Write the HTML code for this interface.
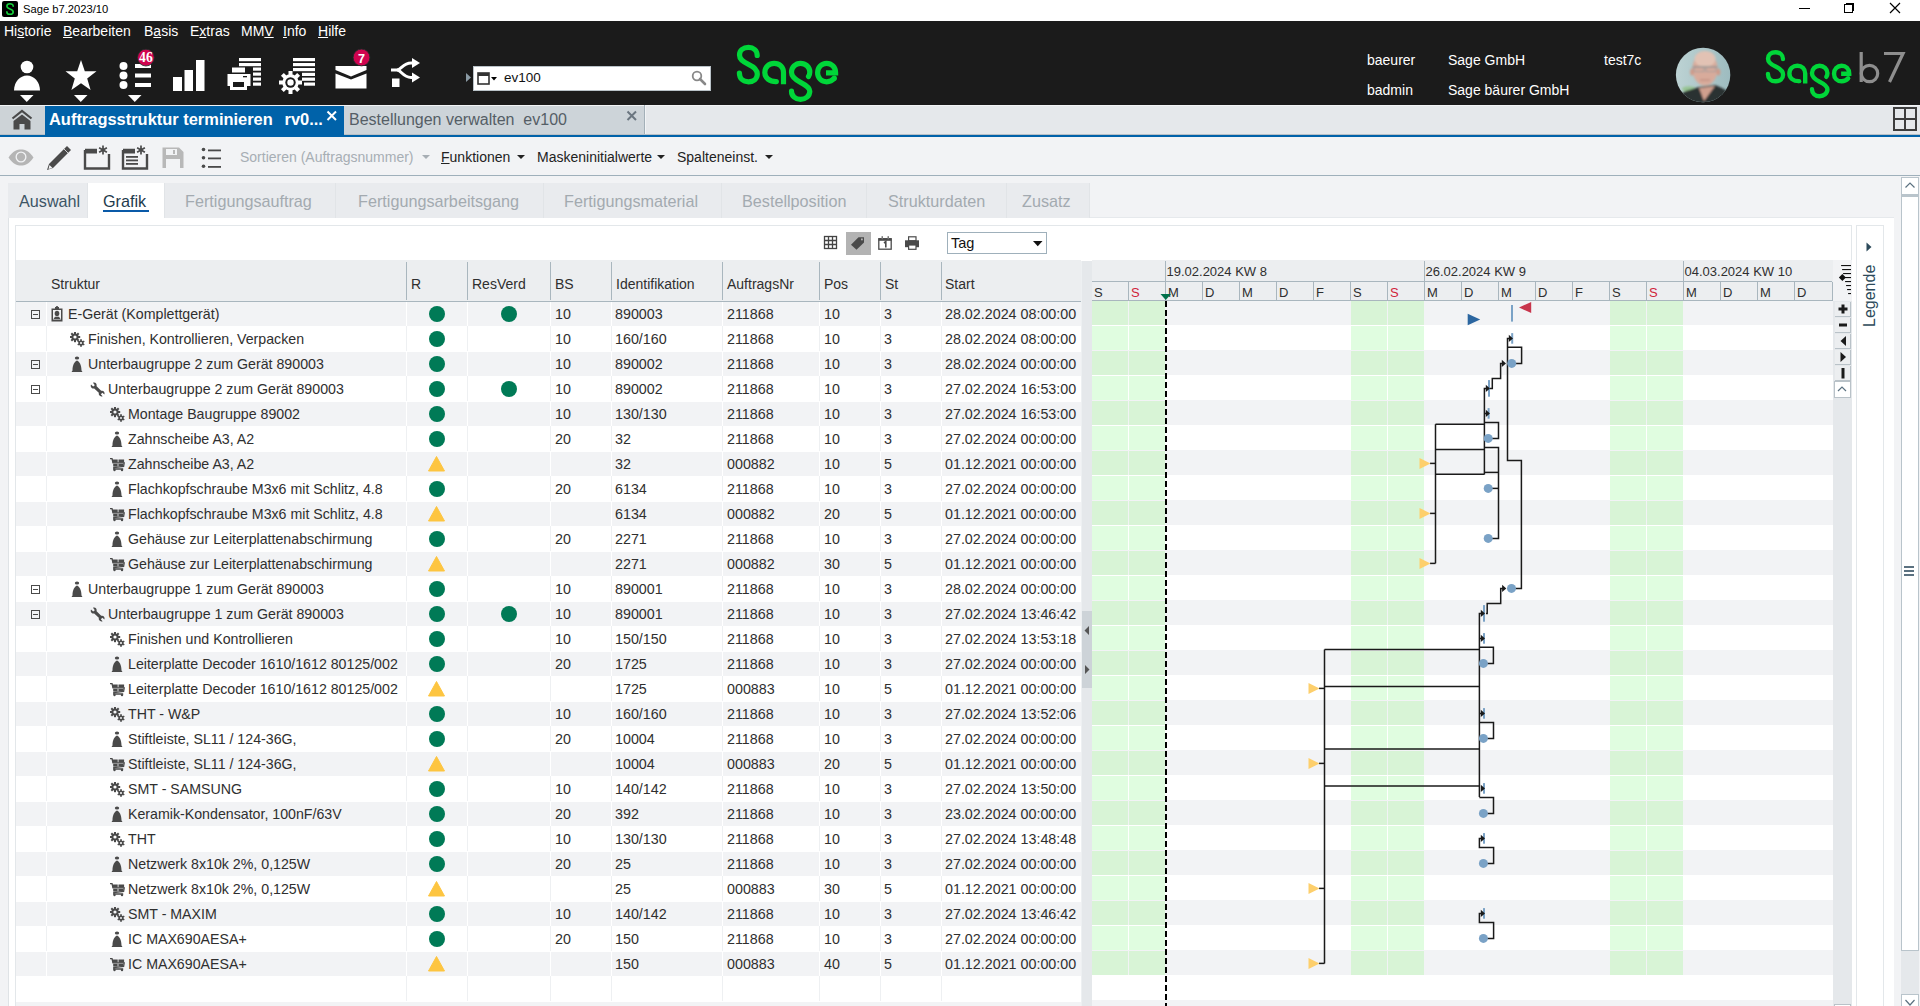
<!DOCTYPE html><html><head><meta charset="utf-8"><style>
*{margin:0;padding:0;box-sizing:border-box}
html,body{width:1920px;height:1006px;overflow:hidden;background:#f2f3f5;font-family:"Liberation Sans", sans-serif;}
.a{position:absolute}
.t{position:absolute;white-space:nowrap;line-height:1}
</style></head><body>
<div class="a" style="left:0;top:0;width:1920px;height:21px;background:#fff"></div><div class="a" style="left:2px;top:1px;width:16px;height:16px;background:#000;border-radius:2px"></div><svg class="a" style="left:2px;top:1px" width="16" height="16"><path d="M11.2 5.2C11.2 3.6 9.8 2.8 8 2.8C6.2 2.8 4.9 3.7 4.9 5.2C4.9 6.6 6 7.3 8 8C10 8.7 11.2 9.5 11.2 11C11.2 12.5 9.8 13.3 8 13.3C6.2 13.3 4.9 12.5 4.9 10.9" fill="none" stroke="#16d13c" stroke-width="1.6" stroke-linecap="round"/></svg><div class="t" style="left:23px;top:4px;font-size:11.2px;color:#000">Sage b7.2023/10</div><div class="a" style="left:1799px;top:8px;width:11px;height:1px;background:#000"></div><div class="a" style="left:1844px;top:4px;width:9px;height:9px;border:1px solid #000"></div><div class="a" style="left:1846px;top:3px;width:8px;height:8px;border-top:1px solid #000;border-right:1px solid #000"></div><svg class="a" style="left:1889px;top:2px" width="12" height="12"><path d="M1 1L11 11M11 1L1 11" stroke="#000" stroke-width="1.2"/></svg><div class="a" style="left:0;top:21px;width:1920px;height:84px;background:#1b1b1b"></div><div class="t" style="left:4px;top:24px;font-size:14px;color:#fff;text-underline-offset:1px">Hi<u>s</u>torie</div><div class="t" style="left:63px;top:24px;font-size:14px;color:#fff;text-underline-offset:1px"><u>B</u>earbeiten</div><div class="t" style="left:144px;top:24px;font-size:14px;color:#fff;text-underline-offset:1px">B<u>a</u>sis</div><div class="t" style="left:190px;top:24px;font-size:14px;color:#fff;text-underline-offset:1px">E<u>x</u>tras</div><div class="t" style="left:241px;top:24px;font-size:14px;color:#fff;text-underline-offset:1px">MM<u>V</u></div><div class="t" style="left:283px;top:24px;font-size:14px;color:#fff;text-underline-offset:1px"><u>I</u>nfo</div><div class="t" style="left:318px;top:24px;font-size:14px;color:#fff;text-underline-offset:1px"><u>H</u>ilfe</div>
<svg class="a" style="left:0;top:40px" width="440" height="65" viewBox="0 40 440 65">
 <circle cx="27" cy="67" r="6.3" fill="#fff"/>
 <path d="M14 90.5 C14 82 20 75.5 27 75.5 C34 75.5 40 82 40 90.5 Z" fill="#fff"/>
 <path d="M20 95 L33.5 95 L26.75 102 Z" fill="#fff"/>
 <path d="M81 60 L84.8 71.2 L96.5 71.3 L87.2 78.4 L90.6 90 L81 83.2 L71.4 90 L74.8 78.4 L65.5 71.3 L77.2 71.2 Z" fill="#fff"/>
 <path d="M74 95 L87.5 95 L80.75 102 Z" fill="#fff"/>
 <circle cx="123.5" cy="66" r="4" fill="#fff"/><circle cx="123.5" cy="75.5" r="4" fill="#fff"/><circle cx="123.5" cy="85" r="4" fill="#fff"/>
 <rect x="135" y="64" width="16" height="4" fill="#fff"/><rect x="135" y="73.5" width="16" height="4" fill="#fff"/><rect x="135" y="83" width="16" height="4" fill="#fff"/>
 <path d="M128 95 L141.5 95 L134.75 102 Z" fill="#fff"/>
 <circle cx="145.9" cy="57.6" r="8.4" fill="#d0044f" stroke="#1d2e2b" stroke-width="0.8"/>
 <text x="145.9" y="61.9" font-family="Liberation Serif" font-weight="bold" font-size="13.6" fill="#fff" text-anchor="middle">46</text>
 <rect x="173" y="77" width="9" height="14" fill="#fff"/><rect x="184.5" y="70" width="8.5" height="21" fill="#fff"/><rect x="196" y="60" width="8.5" height="31" fill="#fff"/>
 <!-- printer list -->
 <rect x="239" y="58" width="22" height="3.2" fill="#fff"/><rect x="239" y="63" width="22" height="3.2" fill="#fff"/>
 <rect x="253" y="67.5" width="8" height="3.2" fill="#fff"/><rect x="253" y="72.5" width="8" height="3.2" fill="#fff"/><rect x="253" y="77.5" width="8" height="3.2" fill="#fff"/><rect x="253" y="82.5" width="8" height="3.2" fill="#fff"/>
 <rect x="232" y="67.5" width="13" height="5" fill="#fff"/>
 <path d="M227.5 74 H250.5 V86 H247 V90 H230 V86 H227.5 Z" fill="#fff"/>
 <rect x="233" y="82" width="11" height="5" fill="#1b1b1b"/>
 <rect x="243" y="76" width="4" height="1.3" fill="#1b1b1b"/>
 <!-- gear list -->
 <rect x="293" y="58" width="22" height="3.2" fill="#fff"/><rect x="293" y="63" width="22" height="3.2" fill="#fff"/><rect x="293" y="68" width="22" height="3.2" fill="#fff"/>
 <rect x="302" y="72.8" width="13" height="3.2" fill="#fff"/><rect x="302" y="77.6" width="13" height="3.2" fill="#fff"/><rect x="304" y="82.5" width="11" height="3.2" fill="#fff"/>
 <g transform="translate(290.5 82.5)">
  <circle r="8.2" fill="#fff"/>
  <g fill="#fff"><rect x="-2" y="-11.5" width="4" height="23"/><rect x="-2" y="-11.5" width="4" height="23" transform="rotate(45)"/><rect x="-2" y="-11.5" width="4" height="23" transform="rotate(90)"/><rect x="-2" y="-11.5" width="4" height="23" transform="rotate(135)"/></g>
  <circle r="5.2" fill="#1b1b1b"/><circle r="3.2" fill="#fff"/>
 </g>
 <!-- mail -->
 <path d="M335.5 66 L366.5 66 L366.5 70 L351 76.5 L335.5 70 Z" fill="#fff"/>
 <path d="M335.5 73.5 L351 79.5 L366.5 73.5 L366.5 88.5 L335.5 88.5 Z" fill="#fff"/>
 <circle cx="361.5" cy="57.5" r="8.4" fill="#d0044f" stroke="#1d2e2b" stroke-width="0.8"/>
 <text x="361.5" y="62.5" font-family="Liberation Sans" font-weight="bold" font-size="12.5" fill="#fff" text-anchor="middle">7</text>
 <!-- share -->
 <path d="M391 70 H397 C401 70 403 63 411 63 H413" fill="none" stroke="#fff" stroke-width="3"/>
 <path d="M397 70 C401 70 403 77.5 411 77.5 H413" fill="none" stroke="#fff" stroke-width="3"/>
 <path d="M412 58 L420 63 L412 68 Z" fill="#fff"/><path d="M412 72.5 L420 77.5 L412 82.5 Z" fill="#fff"/>
 <rect x="392" y="78.5" width="7.5" height="8.5" fill="#fff"/>
</svg><svg class="a" style="left:466px;top:73px" width="6" height="10"><path d="M0 0L5 4.5L0 9Z" fill="#8a9aa4"/></svg><div class="a" style="left:473px;top:66px;width:238px;height:25px;background:#fff;border:1px solid #b9c2c8"></div><svg class="a" style="left:477px;top:71px" width="30" height="16"><rect x="1" y="2" width="11" height="11" fill="none" stroke="#333" stroke-width="1.6"/><rect x="1" y="2" width="11" height="3" fill="#333"/><path d="M14 6 L20 6 L17 9.5 Z" fill="#000"/></svg><div class="t" style="left:504px;top:71px;font-size:13.5px;color:#111">ev100</div><svg class="a" style="left:691px;top:70px" width="16" height="16"><circle cx="6" cy="6" r="4.3" fill="none" stroke="#888" stroke-width="1.8"/><path d="M9 9 L14 14" stroke="#888" stroke-width="2.6" stroke-linecap="round"/></svg><svg class="a" style="left:730px;top:40px" width="114" height="66"><g transform="scale(1.0)" fill="none" stroke="#00d639" stroke-width="5.2" stroke-linecap="round">
<path d="M27.2 15.5 C27.2 10.5 23.5 7.4 18.5 7.4 C13.2 7.4 9.5 10.5 9.5 15 C9.5 19.3 12.5 21.5 18.5 24.3 C24.5 27.1 27.3 29.5 27.3 34 C27.3 38.8 23.5 41.8 18.5 41.8 C13.2 41.8 9.4 38.5 9.4 33"/>
<path d="M46 41.6 C39.5 41.6 34.8 38 34.8 32.5 C34.8 27 39 23.3 44.2 23.3 C49.5 23.3 53.5 27 53.5 32.5 L53.5 44.3" stroke-linecap="butt"/>
<path d="M78.5 36.5 C79.5 35 79.8 33.5 79.8 32 C79.8 27 75.5 23.3 70.5 23.3 C65.5 23.3 61.5 27.3 61.5 32.3 C61.5 36.8 64.5 39.3 70.5 42.3 C76.5 45.3 79.8 47.8 79.8 51.3 C79.8 56 75.5 59.4 70.5 59.4 C65.5 59.4 61.5 56 61.5 51.2"/>
<path d="M96 32.8 L105.6 32.8 C105.6 27 101.5 23.3 96.6 23.3 C91.5 23.3 87.6 27.5 87.6 32.7 C87.6 38 91.5 41.8 96.6 41.8 C99.8 41.8 102.3 40.6 104.3 38.2" stroke-linecap="butt"/>
<circle cx="46.3" cy="41.6" r="2.6" fill="#00d639" stroke="none"/><circle cx="104.3" cy="38.2" r="2.6" fill="#00d639" stroke="none"/>
</g></svg><svg class="a" style="left:1759.7px;top:45.7px" width="96" height="56"><g transform="scale(0.845)" fill="none" stroke="#00d639" stroke-width="5.2" stroke-linecap="round">
<path d="M27.2 15.5 C27.2 10.5 23.5 7.4 18.5 7.4 C13.2 7.4 9.5 10.5 9.5 15 C9.5 19.3 12.5 21.5 18.5 24.3 C24.5 27.1 27.3 29.5 27.3 34 C27.3 38.8 23.5 41.8 18.5 41.8 C13.2 41.8 9.4 38.5 9.4 33"/>
<path d="M46 41.6 C39.5 41.6 34.8 38 34.8 32.5 C34.8 27 39 23.3 44.2 23.3 C49.5 23.3 53.5 27 53.5 32.5 L53.5 44.3" stroke-linecap="butt"/>
<path d="M78.5 36.5 C79.5 35 79.8 33.5 79.8 32 C79.8 27 75.5 23.3 70.5 23.3 C65.5 23.3 61.5 27.3 61.5 32.3 C61.5 36.8 64.5 39.3 70.5 42.3 C76.5 45.3 79.8 47.8 79.8 51.3 C79.8 56 75.5 59.4 70.5 59.4 C65.5 59.4 61.5 56 61.5 51.2"/>
<path d="M96 32.8 L105.6 32.8 C105.6 27 101.5 23.3 96.6 23.3 C91.5 23.3 87.6 27.5 87.6 32.7 C87.6 38 91.5 41.8 96.6 41.8 C99.8 41.8 102.3 40.6 104.3 38.2" stroke-linecap="butt"/>
<circle cx="46.3" cy="41.6" r="2.6" fill="#00d639" stroke="none"/><circle cx="104.3" cy="38.2" r="2.6" fill="#00d639" stroke="none"/>
</g></svg><svg class="a" style="left:1855px;top:48px" width="55" height="40"><g fill="none" stroke="#8e8e8e" stroke-width="3.2"><path d="M6.2 4 V34"/><circle cx="14.5" cy="25.5" r="8.2"/><path d="M29 5.5 H48 L34.5 34"/></g></svg><div class="t" style="left:1367px;top:53px;font-size:14px;color:#fff">baeurer</div><div class="t" style="left:1448px;top:53px;font-size:14px;color:#fff">Sage GmbH</div><div class="t" style="left:1604px;top:53px;font-size:14px;color:#fff">test7c</div><div class="t" style="left:1367px;top:83px;font-size:14px;color:#fff">badmin</div><div class="t" style="left:1448px;top:83px;font-size:14px;color:#fff">Sage bäurer GmbH</div><svg class="a" style="left:1675px;top:47px" width="56" height="56"><defs><clipPath id="av"><circle cx="28.1" cy="28" r="27.2"/></clipPath>
<linearGradient id="avbg" x1="0" x2="1" y1="0" y2="0"><stop offset="0" stop-color="#bdd3d4"/><stop offset="1" stop-color="#9dbbbf"/></linearGradient>
<filter id="avb" x="-10%" y="-10%" width="120%" height="120%"><feGaussianBlur stdDeviation="0.9"/></filter></defs>
<g clip-path="url(#av)"><rect width="56" height="56" fill="url(#avbg)"/>
<g filter="url(#avb)">
<ellipse cx="14" cy="42" rx="7" ry="2.8" fill="#8fc284" opacity="0.8"/>
<path d="M5 56 L7 46 C12 43 19 42 24 40 L40 38 C45 40 50 42 54 46 L56 56Z" fill="#2b3132"/>
<path d="M24 41 L29 54 L40 39 Z" fill="#cf9f8e"/>
<ellipse cx="30" cy="22" rx="12.5" ry="16.5" fill="#d8ab9b"/>
<ellipse cx="30" cy="12" rx="10.5" ry="8" fill="#e2c2b4"/>
<ellipse cx="17" cy="25" rx="1.8" ry="3.5" fill="#d09a88"/><ellipse cx="43.5" cy="25" rx="1.8" ry="3.5" fill="#d09a88"/>
<path d="M17.5 20 H42.5" stroke="#8d8d8d" stroke-width="1.3"/><rect x="19" y="20" width="10" height="4.5" fill="none" stroke="#9b9b9b" stroke-width="0.9"/><rect x="31" y="20" width="10" height="4.5" fill="none" stroke="#9b9b9b" stroke-width="0.9"/>
<path d="M25 33 H35" stroke="#b98576" stroke-width="1"/>
</g></g></svg><div class="a" style="left:0;top:105px;width:1920px;height:1px;background:#f2f4f6"></div><div class="a" style="left:0;top:106px;width:1920px;height:28px;background:#e5e8eb"></div><div class="a" style="left:0;top:106px;width:45px;height:28px;background:#cdd3d7"></div><svg class="a" style="left:10px;top:109px" width="24" height="22"><path d="M2.5 9.5 L12 2 L21.5 9.5" fill="none" stroke="#4a4a4a" stroke-width="2.2"/><path d="M3.5 12 L12 5.5 L20.5 12 V20.5 H14.5 V15 H9.5 V20.5 H3.5Z" fill="#4a4a4a"/></svg><div class="a" style="left:45px;top:106px;width:299px;height:31px;background:#0062a9"></div><div class="t" style="left:49px;top:111px;font-size:16.45px;font-weight:bold;color:#fff">Auftragsstruktur terminieren</div><div class="t" style="left:284.5px;top:111px;font-size:16.45px;font-weight:bold;color:#fff">rv0...</div><svg class="a" style="left:326px;top:110px" width="12" height="12"><path d="M1.5 1.5L10 10M10 1.5L1.5 10" stroke="#fff" stroke-width="2"/></svg><div class="a" style="left:344px;top:106px;width:300px;height:28px;background:#cdd4d9"></div><div class="t" style="left:349px;top:112px;font-size:16px;color:#555e66">Bestellungen verwalten&nbsp; ev100</div><div class="a" style="left:644px;top:105px;width:1px;height:29px;background:#a3b0b8"></div><div class="a" style="left:645px;top:105px;width:1px;height:29px;background:#f2f4f6"></div><svg class="a" style="left:626px;top:110px" width="12" height="12"><path d="M1.5 1.5L10 10M10 1.5L1.5 10" stroke="#6b7680" stroke-width="2"/></svg><svg class="a" style="left:1892px;top:106px" width="26" height="26"><g fill="none" stroke="#3d3d3d" stroke-width="2"><rect x="2" y="2" width="22" height="22"/><path d="M13 2V24M2 13H24"/></g></svg><div class="a" style="left:0;top:134px;width:1920px;height:1px;background:#b9c0c6"></div><div class="a" style="left:45px;top:134px;width:299px;height:1px;background:#0062a9"></div><div class="a" style="left:0;top:135px;width:1920px;height:2px;background:#0062a9"></div><div class="a" style="left:0;top:137px;width:1920px;height:38px;background:#f2f3f5"></div><div class="a" style="left:0;top:175px;width:1920px;height:1px;background:#9fb0bb"></div><svg class="a" style="left:0;top:140px" width="240" height="35" viewBox="0 140 240 35">
 <path d="M8.5 157.5 C13 151 17 149.5 21 149.5 C25 149.5 29 151 33.5 157.5 C29 164 25 165.5 21 165.5 C17 165.5 13 164 8.5 157.5Z" fill="#b5b5b5"/>
 <circle cx="21" cy="157" r="5.5" fill="#f2f3f5"/><circle cx="21" cy="157" r="4.2" fill="#b5b5b5"/>
 <path d="M67 146 L71 150 L53 168 L47 170 L49 164 Z" fill="#4a4a4a"/><path d="M49.5 165 L48.5 169 L52.5 168Z" fill="#f2f3f5"/>
 <path d="M64 149 L68 153" stroke="#f2f3f5" stroke-width="0.8"/>
 <path d="M85 150 H97 M109 154 V168.5 H85 V150" fill="none" stroke="#4a4a4a" stroke-width="2.4"/>
 <path d="M85.2 151.5 H97" stroke="#4a4a4a" stroke-width="4"/>
 <g stroke="#4a4a4a" stroke-width="1.7"><path d="M103 145.5V154.5M99.1 147.75L106.9 152.25M99.1 152.25L106.9 147.75"/></g>
 <path d="M123 150 H135 M147 154 V168.5 H123 V150" fill="none" stroke="#4a4a4a" stroke-width="2.4"/>
 <path d="M123.2 151.5 H135" stroke="#4a4a4a" stroke-width="4"/>
 <rect x="126" y="156" width="12" height="1.8" fill="#4a4a4a"/><rect x="126" y="159.5" width="12" height="1.8" fill="#4a4a4a"/><rect x="126" y="163" width="12" height="1.8" fill="#4a4a4a"/>
 <g stroke="#4a4a4a" stroke-width="1.7"><path d="M141 145.5V154.5M137.1 147.75L144.9 152.25M137.1 152.25L144.9 147.75"/></g>
 <path d="M162.5 147.5 H179 L183.5 152 V168 H162.5Z" fill="#b8b8b8"/><rect x="166" y="149" width="11" height="6" fill="#f2f3f5"/><rect x="173" y="150" width="2" height="4" fill="#b8b8b8"/><rect x="166" y="159" width="14" height="9" fill="#f2f3f5"/>
 <circle cx="203.5" cy="149.5" r="1.8" fill="#4a4a4a"/><circle cx="203.5" cy="157.8" r="1.8" fill="#4a4a4a"/><circle cx="203.5" cy="166.2" r="1.8" fill="#4a4a4a"/>
 <rect x="208" y="149.5" width="13" height="1.8" fill="#4a4a4a"/><rect x="208" y="157.5" width="13" height="1.8" fill="#4a4a4a"/><rect x="208" y="166" width="13" height="1.8" fill="#4a4a4a"/>
</svg><div class="t" style="left:240px;top:150px;font-size:14px;color:#a7aeb4">Sortieren (Auftragsnummer)</div><svg class="a" style="left:422px;top:155px" width="8" height="5"><path d="M0 0H8L4 4Z" fill="#a7aeb4"/></svg><div class="t" style="left:441px;top:150px;font-size:14px;color:#222;text-underline-offset:1px"><u>F</u>unktionen</div><svg class="a" style="left:517px;top:155px" width="8" height="5"><path d="M0 0H8L4 4Z" fill="#222"/></svg><div class="t" style="left:537px;top:150px;font-size:14px;color:#222;text-underline-offset:1px">Maskeninitialwerte</div><svg class="a" style="left:657px;top:155px" width="8" height="5"><path d="M0 0H8L4 4Z" fill="#222"/></svg><div class="t" style="left:677px;top:150px;font-size:14px;color:#222;text-underline-offset:1px">Spalteneinst.</div><svg class="a" style="left:765px;top:155px" width="8" height="5"><path d="M0 0H8L4 4Z" fill="#222"/></svg><div class="a" style="left:0;top:176px;width:1920px;height:830px;background:#f2f3f5"></div><div class="a" style="left:8px;top:218px;width:1px;height:788px;background:#dfe3e6"></div><div class="a" style="left:8px;top:183px;width:80px;height:35px;background:#e9ebee;border-right:1px solid #e1e4e7"></div><div class="t" style="left:19px;top:193px;font-size:16.2px;color:#3d5565">Auswahl</div><div class="a" style="left:88px;top:183px;width:77px;height:35px;background:#fff;border-right:1px solid #e1e4e7"></div><div class="t" style="left:103px;top:193px;font-size:16.2px;color:#1e3a4c">Grafik</div><div class="a" style="left:165px;top:183px;width:171px;height:35px;background:#e9ebee;border-right:1px solid #e1e4e7"></div><div class="t" style="left:185px;top:193px;font-size:16.2px;color:#a3aab0">Fertigungsauftrag</div><div class="a" style="left:336px;top:183px;width:208px;height:35px;background:#e9ebee;border-right:1px solid #e1e4e7"></div><div class="t" style="left:358px;top:193px;font-size:16.2px;color:#a3aab0">Fertigungsarbeitsgang</div><div class="a" style="left:544px;top:183px;width:178px;height:35px;background:#e9ebee;border-right:1px solid #e1e4e7"></div><div class="t" style="left:564px;top:193px;font-size:16.2px;color:#a3aab0">Fertigungsmaterial</div><div class="a" style="left:722px;top:183px;width:145px;height:35px;background:#e9ebee;border-right:1px solid #e1e4e7"></div><div class="t" style="left:742px;top:193px;font-size:16.2px;color:#a3aab0">Bestellposition</div><div class="a" style="left:867px;top:183px;width:140px;height:35px;background:#e9ebee;border-right:1px solid #e1e4e7"></div><div class="t" style="left:888px;top:193px;font-size:16.2px;color:#a3aab0">Strukturdaten</div><div class="a" style="left:1007px;top:183px;width:83px;height:35px;background:#e9ebee;border-right:1px solid #e1e4e7"></div><div class="t" style="left:1022px;top:193px;font-size:16.2px;color:#a3aab0">Zusatz</div><div class="a" style="left:103px;top:210px;width:46px;height:2px;background:#0a5aa8"></div><div class="a" style="left:1090px;top:217px;width:804px;height:1px;background:#e6e9ec"></div><div class="a" style="left:9px;top:218px;width:1885px;height:788px;background:#fff"></div><div class="a" style="left:15px;top:225px;width:1837px;height:781px;background:#fff;border:1px solid #e3e7ea;border-bottom:none"></div><div class="a" style="left:1856px;top:225px;width:28px;height:781px;background:#fff;border:1px solid #e3e7ea;border-bottom:none"></div><svg class="a" style="left:1866px;top:242px" width="6" height="10"><path d="M0.5 0.5 L5.5 5 L0.5 9.5Z" fill="#2d4a5a"/></svg><div class="t" style="left:1862px;top:327px;font-size:16px;color:#2d4a5a;transform:rotate(-90deg);transform-origin:0 0">Legende</div><div class="a" style="left:1901px;top:177px;width:18px;height:829px;background:#e5e8eb"></div><div class="a" style="left:1901px;top:177px;width:18px;height:18px;background:#fff;border:1px solid #b9c4cb"></div><div class="a" style="left:1901px;top:195px;width:18px;height:756px;background:#fff;border:1px solid #b9c4cb;border-top-width:2px"></div><div class="a" style="left:1901px;top:994px;width:18px;height:20px;background:#fff;border:1px solid #b9c4cb"></div><svg class="a" style="left:1904px;top:180px" width="12" height="10"><path d="M1.5 7.5 L6 3 L10.5 7.5" fill="none" stroke="#5b7180" stroke-width="1.2"/></svg><svg class="a" style="left:1904px;top:998px" width="12" height="10"><path d="M1.5 2 L6 7 L10.5 2" fill="none" stroke="#5b7180" stroke-width="1.2"/></svg><div class="a" style="left:1904px;top:566px;width:10px;height:2px;background:#5b7180"></div><div class="a" style="left:1904px;top:570px;width:10px;height:2px;background:#5b7180"></div><div class="a" style="left:1904px;top:574px;width:10px;height:2px;background:#5b7180"></div><svg class="a" style="left:820px;top:230px" width="110" height="26" viewBox="820 230 110 26">
 <g fill="none" stroke="#444" stroke-width="1.3"><rect x="824.5" y="236.5" width="12" height="12"/><path d="M828.5 236.5V248.5M832.5 236.5V248.5M824.5 240.5H836.5M824.5 244.5H836.5"/></g>
 <rect x="846" y="232" width="25" height="23" fill="#b3b3b3"/>
 <path d="M851 244.7 L858.5 237.2 L864 237.2 L864 242.5 L856.5 249.7 Z" fill="#4a4a4a"/><rect x="861" y="238.5" width="1.8" height="1.8" fill="#b3b3b3"/>
 <rect x="878.8" y="238.8" width="12.4" height="10.4" fill="none" stroke="#4a4a4a" stroke-width="1.3"/><rect x="878.5" y="238.2" width="13" height="2.6" fill="#4a4a4a"/><rect x="881.5" y="236.2" width="1.5" height="3" fill="#777"/><rect x="887.5" y="236.2" width="1.5" height="3" fill="#777"/>
 <path d="M884 243 L885.8 241.6 L885.8 247.6" fill="none" stroke="#4a4a4a" stroke-width="1.6"/>
 <rect x="908.6" y="236.8" width="7.4" height="4" fill="#fff" stroke="#4a4a4a" stroke-width="1.2"/><path d="M905 240.3 H919 V247.2 H905Z" fill="#4a4a4a"/><rect x="908.6" y="245" width="7.4" height="4.3" fill="#fff" stroke="#4a4a4a" stroke-width="1.2"/>
</svg><div class="a" style="left:947px;top:232px;width:100px;height:22px;background:#fff;border:1px solid #9fb0bb"></div><div class="t" style="left:951px;top:235.5px;font-size:14.5px;color:#111">Tag</div><svg class="a" style="left:1032.5px;top:241px" width="10" height="6"><path d="M0 0H9.5L4.75 5.2Z" fill="#111"/></svg><div class="a" style="left:16px;top:260px;width:1065px;height:41px;background:#eceef0"></div><div class="t" style="left:51px;top:277px;font-size:14px;color:#2f2f2f">Struktur</div><div class="t" style="left:411px;top:277px;font-size:14px;color:#2f2f2f">R</div><div class="a" style="left:406px;top:262px;width:1px;height:38px;background:#a9b6be"></div><div class="t" style="left:472px;top:277px;font-size:14px;color:#2f2f2f">ResVerd</div><div class="a" style="left:467px;top:262px;width:1px;height:38px;background:#a9b6be"></div><div class="t" style="left:555px;top:277px;font-size:14px;color:#2f2f2f">BS</div><div class="a" style="left:550px;top:262px;width:1px;height:38px;background:#a9b6be"></div><div class="t" style="left:616px;top:277px;font-size:14px;color:#2f2f2f">Identifikation</div><div class="a" style="left:611px;top:262px;width:1px;height:38px;background:#a9b6be"></div><div class="t" style="left:727px;top:277px;font-size:14px;color:#2f2f2f">AuftragsNr</div><div class="a" style="left:722px;top:262px;width:1px;height:38px;background:#a9b6be"></div><div class="t" style="left:824px;top:277px;font-size:14px;color:#2f2f2f">Pos</div><div class="a" style="left:819px;top:262px;width:1px;height:38px;background:#a9b6be"></div><div class="t" style="left:885px;top:277px;font-size:14px;color:#2f2f2f">St</div><div class="a" style="left:880px;top:262px;width:1px;height:38px;background:#a9b6be"></div><div class="t" style="left:945px;top:277px;font-size:14px;color:#2f2f2f">Start</div><div class="a" style="left:941px;top:262px;width:1px;height:38px;background:#a9b6be"></div><div class="a" style="left:16px;top:302px;width:1065px;height:24px;background:#f2f3f5"></div><div class="a" style="left:46px;top:301px;width:1px;height:25px;background:#fff"></div><div class="a" style="left:406px;top:301px;width:1px;height:25px;background:#fff"></div><div class="a" style="left:467px;top:301px;width:1px;height:25px;background:#fff"></div><div class="a" style="left:550px;top:301px;width:1px;height:25px;background:#fff"></div><div class="a" style="left:611px;top:301px;width:1px;height:25px;background:#fff"></div><div class="a" style="left:722px;top:301px;width:1px;height:25px;background:#fff"></div><div class="a" style="left:819px;top:301px;width:1px;height:25px;background:#fff"></div><div class="a" style="left:880px;top:301px;width:1px;height:25px;background:#fff"></div><div class="a" style="left:941px;top:301px;width:1px;height:25px;background:#fff"></div><div class="a" style="left:31px;top:310px;width:9px;height:9px;border:1px solid #4a4a4a"></div><div class="a" style="left:33px;top:314px;width:5px;height:1px;background:#4a4a4a"></div><svg class="a" style="left:51px;top:306px" width="14" height="18"><path d="M0.5 2.5 H4 V1 H8 V2.5 H11.5 V15.5 H0.5Z" fill="#4a4a4a"/><rect x="2" y="4" width="8" height="9.5" fill="#f2f3f5"/><ellipse cx="6" cy="7.5" rx="2.3" ry="2.8" fill="#4a4a4a"/><path d="M2.5 13 L4 10.8 L8 10.8 L9.5 13Z" fill="#4a4a4a"/><circle cx="6" cy="1.2" r="1.2" fill="#4a4a4a"/></svg><div class="t" style="left:68px;top:307px;font-size:14.2px;color:#2f2f2f">E-Gerät (Komplettgerät)</div><div class="a" style="left:428.5px;top:305.5px;width:16px;height:16px;border-radius:50%;background:#007a56"></div><div class="a" style="left:500.5px;top:305.5px;width:16px;height:16px;border-radius:50%;background:#007a56"></div><div class="t" style="left:555px;top:307px;font-size:14.3px;color:#2f2f2f">10</div><div class="t" style="left:615px;top:307px;font-size:14.3px;color:#2f2f2f">890003</div><div class="t" style="left:727px;top:307px;font-size:14.3px;color:#2f2f2f">211868</div><div class="t" style="left:824px;top:307px;font-size:14.3px;color:#2f2f2f">10</div><div class="t" style="left:884px;top:307px;font-size:14.3px;color:#2f2f2f">3</div><div class="t" style="left:945px;top:307px;font-size:14.3px;color:#2f2f2f">28.02.2024 08:00:00</div><div class="a" style="left:46px;top:326px;width:1px;height:25px;background:#eef0f2"></div><div class="a" style="left:406px;top:326px;width:1px;height:25px;background:#eef0f2"></div><div class="a" style="left:467px;top:326px;width:1px;height:25px;background:#eef0f2"></div><div class="a" style="left:550px;top:326px;width:1px;height:25px;background:#eef0f2"></div><div class="a" style="left:611px;top:326px;width:1px;height:25px;background:#eef0f2"></div><div class="a" style="left:722px;top:326px;width:1px;height:25px;background:#eef0f2"></div><div class="a" style="left:819px;top:326px;width:1px;height:25px;background:#eef0f2"></div><div class="a" style="left:880px;top:326px;width:1px;height:25px;background:#eef0f2"></div><div class="a" style="left:941px;top:326px;width:1px;height:25px;background:#eef0f2"></div><svg class="a" style="left:70px;top:331.5px" width="17" height="17"><g transform="translate(5 5)"><circle r="3.6" fill="#4a4a4a"/><g fill="#4a4a4a"><rect x="-1" y="-5.2" width="2" height="10.4"/><rect x="-1" y="-5.2" width="2" height="10.4" transform="rotate(45)"/><rect x="-1" y="-5.2" width="2" height="10.4" transform="rotate(90)"/><rect x="-1" y="-5.2" width="2" height="10.4" transform="rotate(135)"/></g><circle r="1.6" fill="#fff"/></g><g transform="translate(11 11)"><circle r="2.6" fill="#4a4a4a"/><g fill="#4a4a4a"><rect x="-0.8" y="-3.8" width="1.6" height="7.6"/><rect x="-0.8" y="-3.8" width="1.6" height="7.6" transform="rotate(60)"/><rect x="-0.8" y="-3.8" width="1.6" height="7.6" transform="rotate(120)"/></g><circle r="1" fill="#fff"/></g></svg><div class="t" style="left:88px;top:332px;font-size:14.2px;color:#2f2f2f">Finishen, Kontrollieren, Verpacken</div><div class="a" style="left:428.5px;top:330.5px;width:16px;height:16px;border-radius:50%;background:#007a56"></div><div class="t" style="left:555px;top:332px;font-size:14.3px;color:#2f2f2f">10</div><div class="t" style="left:615px;top:332px;font-size:14.3px;color:#2f2f2f">160/160</div><div class="t" style="left:727px;top:332px;font-size:14.3px;color:#2f2f2f">211868</div><div class="t" style="left:824px;top:332px;font-size:14.3px;color:#2f2f2f">10</div><div class="t" style="left:884px;top:332px;font-size:14.3px;color:#2f2f2f">3</div><div class="t" style="left:945px;top:332px;font-size:14.3px;color:#2f2f2f">28.02.2024 08:00:00</div><div class="a" style="left:16px;top:352px;width:1065px;height:24px;background:#f2f3f5"></div><div class="a" style="left:46px;top:351px;width:1px;height:25px;background:#fff"></div><div class="a" style="left:406px;top:351px;width:1px;height:25px;background:#fff"></div><div class="a" style="left:467px;top:351px;width:1px;height:25px;background:#fff"></div><div class="a" style="left:550px;top:351px;width:1px;height:25px;background:#fff"></div><div class="a" style="left:611px;top:351px;width:1px;height:25px;background:#fff"></div><div class="a" style="left:722px;top:351px;width:1px;height:25px;background:#fff"></div><div class="a" style="left:819px;top:351px;width:1px;height:25px;background:#fff"></div><div class="a" style="left:880px;top:351px;width:1px;height:25px;background:#fff"></div><div class="a" style="left:941px;top:351px;width:1px;height:25px;background:#fff"></div><div class="a" style="left:31px;top:360px;width:9px;height:9px;border:1px solid #4a4a4a"></div><div class="a" style="left:33px;top:364px;width:5px;height:1px;background:#4a4a4a"></div><svg class="a" style="left:70.5px;top:356px" width="13" height="18"><ellipse cx="6" cy="2" rx="2.2" ry="1.5" fill="#4a4a4a"/><path d="M0.5 16 L1.5 14.5 C1.5 9 3.5 5.5 6 4.5 C8.5 5.5 10.5 9 10.5 14.5 L11.5 16Z" fill="#4a4a4a"/></svg><div class="t" style="left:88px;top:357px;font-size:14.2px;color:#2f2f2f">Unterbaugruppe 2 zum Gerät 890003</div><div class="a" style="left:428.5px;top:355.5px;width:16px;height:16px;border-radius:50%;background:#007a56"></div><div class="t" style="left:555px;top:357px;font-size:14.3px;color:#2f2f2f">10</div><div class="t" style="left:615px;top:357px;font-size:14.3px;color:#2f2f2f">890002</div><div class="t" style="left:727px;top:357px;font-size:14.3px;color:#2f2f2f">211868</div><div class="t" style="left:824px;top:357px;font-size:14.3px;color:#2f2f2f">10</div><div class="t" style="left:884px;top:357px;font-size:14.3px;color:#2f2f2f">3</div><div class="t" style="left:945px;top:357px;font-size:14.3px;color:#2f2f2f">28.02.2024 00:00:00</div><div class="a" style="left:46px;top:376px;width:1px;height:25px;background:#eef0f2"></div><div class="a" style="left:406px;top:376px;width:1px;height:25px;background:#eef0f2"></div><div class="a" style="left:467px;top:376px;width:1px;height:25px;background:#eef0f2"></div><div class="a" style="left:550px;top:376px;width:1px;height:25px;background:#eef0f2"></div><div class="a" style="left:611px;top:376px;width:1px;height:25px;background:#eef0f2"></div><div class="a" style="left:722px;top:376px;width:1px;height:25px;background:#eef0f2"></div><div class="a" style="left:819px;top:376px;width:1px;height:25px;background:#eef0f2"></div><div class="a" style="left:880px;top:376px;width:1px;height:25px;background:#eef0f2"></div><div class="a" style="left:941px;top:376px;width:1px;height:25px;background:#eef0f2"></div><div class="a" style="left:31px;top:385px;width:9px;height:9px;border:1px solid #4a4a4a"></div><div class="a" style="left:33px;top:389px;width:5px;height:1px;background:#4a4a4a"></div><svg class="a" style="left:89px;top:381px" width="18" height="18"><path d="M2 3.5 L4.2 5.5 L5.8 4.2 L4 1.8 C6.2 1 8.2 2.8 7.6 5.2 L12.2 9.8 C14.5 9.2 16.2 11.2 15.4 13.4 L13.4 11.8 L11.8 13.2 L13.6 15.2 C11.4 16.2 9.2 14.2 9.8 11.8 L5.2 7.4 C2.8 8 1 5.8 2 3.5Z" fill="#4a4a4a"/></svg><div class="t" style="left:108px;top:382px;font-size:14.2px;color:#2f2f2f">Unterbaugruppe 2 zum Gerät 890003</div><div class="a" style="left:428.5px;top:380.5px;width:16px;height:16px;border-radius:50%;background:#007a56"></div><div class="a" style="left:500.5px;top:380.5px;width:16px;height:16px;border-radius:50%;background:#007a56"></div><div class="t" style="left:555px;top:382px;font-size:14.3px;color:#2f2f2f">10</div><div class="t" style="left:615px;top:382px;font-size:14.3px;color:#2f2f2f">890002</div><div class="t" style="left:727px;top:382px;font-size:14.3px;color:#2f2f2f">211868</div><div class="t" style="left:824px;top:382px;font-size:14.3px;color:#2f2f2f">10</div><div class="t" style="left:884px;top:382px;font-size:14.3px;color:#2f2f2f">3</div><div class="t" style="left:945px;top:382px;font-size:14.3px;color:#2f2f2f">27.02.2024 16:53:00</div><div class="a" style="left:16px;top:402px;width:1065px;height:24px;background:#f2f3f5"></div><div class="a" style="left:46px;top:401px;width:1px;height:25px;background:#fff"></div><div class="a" style="left:406px;top:401px;width:1px;height:25px;background:#fff"></div><div class="a" style="left:467px;top:401px;width:1px;height:25px;background:#fff"></div><div class="a" style="left:550px;top:401px;width:1px;height:25px;background:#fff"></div><div class="a" style="left:611px;top:401px;width:1px;height:25px;background:#fff"></div><div class="a" style="left:722px;top:401px;width:1px;height:25px;background:#fff"></div><div class="a" style="left:819px;top:401px;width:1px;height:25px;background:#fff"></div><div class="a" style="left:880px;top:401px;width:1px;height:25px;background:#fff"></div><div class="a" style="left:941px;top:401px;width:1px;height:25px;background:#fff"></div><svg class="a" style="left:110px;top:406.5px" width="17" height="17"><g transform="translate(5 5)"><circle r="3.6" fill="#4a4a4a"/><g fill="#4a4a4a"><rect x="-1" y="-5.2" width="2" height="10.4"/><rect x="-1" y="-5.2" width="2" height="10.4" transform="rotate(45)"/><rect x="-1" y="-5.2" width="2" height="10.4" transform="rotate(90)"/><rect x="-1" y="-5.2" width="2" height="10.4" transform="rotate(135)"/></g><circle r="1.6" fill="#f2f3f5"/></g><g transform="translate(11 11)"><circle r="2.6" fill="#4a4a4a"/><g fill="#4a4a4a"><rect x="-0.8" y="-3.8" width="1.6" height="7.6"/><rect x="-0.8" y="-3.8" width="1.6" height="7.6" transform="rotate(60)"/><rect x="-0.8" y="-3.8" width="1.6" height="7.6" transform="rotate(120)"/></g><circle r="1" fill="#f2f3f5"/></g></svg><div class="t" style="left:128px;top:407px;font-size:14.2px;color:#2f2f2f">Montage Baugruppe 89002</div><div class="a" style="left:428.5px;top:405.5px;width:16px;height:16px;border-radius:50%;background:#007a56"></div><div class="t" style="left:555px;top:407px;font-size:14.3px;color:#2f2f2f">10</div><div class="t" style="left:615px;top:407px;font-size:14.3px;color:#2f2f2f">130/130</div><div class="t" style="left:727px;top:407px;font-size:14.3px;color:#2f2f2f">211868</div><div class="t" style="left:824px;top:407px;font-size:14.3px;color:#2f2f2f">10</div><div class="t" style="left:884px;top:407px;font-size:14.3px;color:#2f2f2f">3</div><div class="t" style="left:945px;top:407px;font-size:14.3px;color:#2f2f2f">27.02.2024 16:53:00</div><div class="a" style="left:46px;top:426px;width:1px;height:25px;background:#eef0f2"></div><div class="a" style="left:406px;top:426px;width:1px;height:25px;background:#eef0f2"></div><div class="a" style="left:467px;top:426px;width:1px;height:25px;background:#eef0f2"></div><div class="a" style="left:550px;top:426px;width:1px;height:25px;background:#eef0f2"></div><div class="a" style="left:611px;top:426px;width:1px;height:25px;background:#eef0f2"></div><div class="a" style="left:722px;top:426px;width:1px;height:25px;background:#eef0f2"></div><div class="a" style="left:819px;top:426px;width:1px;height:25px;background:#eef0f2"></div><div class="a" style="left:880px;top:426px;width:1px;height:25px;background:#eef0f2"></div><div class="a" style="left:941px;top:426px;width:1px;height:25px;background:#eef0f2"></div><svg class="a" style="left:110.5px;top:431px" width="13" height="18"><ellipse cx="6" cy="2" rx="2.2" ry="1.5" fill="#4a4a4a"/><path d="M0.5 16 L1.5 14.5 C1.5 9 3.5 5.5 6 4.5 C8.5 5.5 10.5 9 10.5 14.5 L11.5 16Z" fill="#4a4a4a"/></svg><div class="t" style="left:128px;top:432px;font-size:14.2px;color:#2f2f2f">Zahnscheibe A3, A2</div><div class="a" style="left:428.5px;top:430.5px;width:16px;height:16px;border-radius:50%;background:#007a56"></div><div class="t" style="left:555px;top:432px;font-size:14.3px;color:#2f2f2f">20</div><div class="t" style="left:615px;top:432px;font-size:14.3px;color:#2f2f2f">32</div><div class="t" style="left:727px;top:432px;font-size:14.3px;color:#2f2f2f">211868</div><div class="t" style="left:824px;top:432px;font-size:14.3px;color:#2f2f2f">10</div><div class="t" style="left:884px;top:432px;font-size:14.3px;color:#2f2f2f">3</div><div class="t" style="left:945px;top:432px;font-size:14.3px;color:#2f2f2f">27.02.2024 00:00:00</div><div class="a" style="left:16px;top:452px;width:1065px;height:24px;background:#f2f3f5"></div><div class="a" style="left:46px;top:451px;width:1px;height:25px;background:#fff"></div><div class="a" style="left:406px;top:451px;width:1px;height:25px;background:#fff"></div><div class="a" style="left:467px;top:451px;width:1px;height:25px;background:#fff"></div><div class="a" style="left:550px;top:451px;width:1px;height:25px;background:#fff"></div><div class="a" style="left:611px;top:451px;width:1px;height:25px;background:#fff"></div><div class="a" style="left:722px;top:451px;width:1px;height:25px;background:#fff"></div><div class="a" style="left:819px;top:451px;width:1px;height:25px;background:#fff"></div><div class="a" style="left:880px;top:451px;width:1px;height:25px;background:#fff"></div><div class="a" style="left:941px;top:451px;width:1px;height:25px;background:#fff"></div><svg class="a" style="left:110px;top:458px" width="16" height="15"><path d="M0 0.5 H2 L3 4.8 H14.2 L13.6 8.5 L3.8 9.5 V11 H13.2" fill="none" stroke="#4a4a4a" stroke-width="1.3"/><rect x="2.5" y="1.5" width="5.2" height="3.2" fill="#4a4a4a"/><rect x="8.5" y="1.5" width="5.6" height="3.2" fill="#4a4a4a"/><rect x="3.2" y="5.8" width="4.4" height="2.8" fill="#4a4a4a"/><rect x="8.4" y="5.8" width="5" height="2.4" fill="#4a4a4a"/><circle cx="4.5" cy="12" r="1.2" fill="#4a4a4a"/><circle cx="12" cy="12" r="1.2" fill="#4a4a4a"/></svg><div class="t" style="left:128px;top:457px;font-size:14.2px;color:#2f2f2f">Zahnscheibe A3, A2</div><svg class="a" style="left:428.0px;top:456px" width="17" height="16"><path d="M8.5 0.5 L16.5 15 L0.5 15Z" fill="#fdc541" stroke="#fdc541" stroke-width="1" stroke-linejoin="round"/></svg><div class="t" style="left:615px;top:457px;font-size:14.3px;color:#2f2f2f">32</div><div class="t" style="left:727px;top:457px;font-size:14.3px;color:#2f2f2f">000882</div><div class="t" style="left:824px;top:457px;font-size:14.3px;color:#2f2f2f">10</div><div class="t" style="left:884px;top:457px;font-size:14.3px;color:#2f2f2f">5</div><div class="t" style="left:945px;top:457px;font-size:14.3px;color:#2f2f2f">01.12.2021 00:00:00</div><div class="a" style="left:46px;top:476px;width:1px;height:25px;background:#eef0f2"></div><div class="a" style="left:406px;top:476px;width:1px;height:25px;background:#eef0f2"></div><div class="a" style="left:467px;top:476px;width:1px;height:25px;background:#eef0f2"></div><div class="a" style="left:550px;top:476px;width:1px;height:25px;background:#eef0f2"></div><div class="a" style="left:611px;top:476px;width:1px;height:25px;background:#eef0f2"></div><div class="a" style="left:722px;top:476px;width:1px;height:25px;background:#eef0f2"></div><div class="a" style="left:819px;top:476px;width:1px;height:25px;background:#eef0f2"></div><div class="a" style="left:880px;top:476px;width:1px;height:25px;background:#eef0f2"></div><div class="a" style="left:941px;top:476px;width:1px;height:25px;background:#eef0f2"></div><svg class="a" style="left:110.5px;top:481px" width="13" height="18"><ellipse cx="6" cy="2" rx="2.2" ry="1.5" fill="#4a4a4a"/><path d="M0.5 16 L1.5 14.5 C1.5 9 3.5 5.5 6 4.5 C8.5 5.5 10.5 9 10.5 14.5 L11.5 16Z" fill="#4a4a4a"/></svg><div class="t" style="left:128px;top:482px;font-size:14.2px;color:#2f2f2f">Flachkopfschraube M3x6 mit Schlitz, 4.8</div><div class="a" style="left:428.5px;top:480.5px;width:16px;height:16px;border-radius:50%;background:#007a56"></div><div class="t" style="left:555px;top:482px;font-size:14.3px;color:#2f2f2f">20</div><div class="t" style="left:615px;top:482px;font-size:14.3px;color:#2f2f2f">6134</div><div class="t" style="left:727px;top:482px;font-size:14.3px;color:#2f2f2f">211868</div><div class="t" style="left:824px;top:482px;font-size:14.3px;color:#2f2f2f">10</div><div class="t" style="left:884px;top:482px;font-size:14.3px;color:#2f2f2f">3</div><div class="t" style="left:945px;top:482px;font-size:14.3px;color:#2f2f2f">27.02.2024 00:00:00</div><div class="a" style="left:16px;top:502px;width:1065px;height:24px;background:#f2f3f5"></div><div class="a" style="left:46px;top:501px;width:1px;height:25px;background:#fff"></div><div class="a" style="left:406px;top:501px;width:1px;height:25px;background:#fff"></div><div class="a" style="left:467px;top:501px;width:1px;height:25px;background:#fff"></div><div class="a" style="left:550px;top:501px;width:1px;height:25px;background:#fff"></div><div class="a" style="left:611px;top:501px;width:1px;height:25px;background:#fff"></div><div class="a" style="left:722px;top:501px;width:1px;height:25px;background:#fff"></div><div class="a" style="left:819px;top:501px;width:1px;height:25px;background:#fff"></div><div class="a" style="left:880px;top:501px;width:1px;height:25px;background:#fff"></div><div class="a" style="left:941px;top:501px;width:1px;height:25px;background:#fff"></div><svg class="a" style="left:110px;top:508px" width="16" height="15"><path d="M0 0.5 H2 L3 4.8 H14.2 L13.6 8.5 L3.8 9.5 V11 H13.2" fill="none" stroke="#4a4a4a" stroke-width="1.3"/><rect x="2.5" y="1.5" width="5.2" height="3.2" fill="#4a4a4a"/><rect x="8.5" y="1.5" width="5.6" height="3.2" fill="#4a4a4a"/><rect x="3.2" y="5.8" width="4.4" height="2.8" fill="#4a4a4a"/><rect x="8.4" y="5.8" width="5" height="2.4" fill="#4a4a4a"/><circle cx="4.5" cy="12" r="1.2" fill="#4a4a4a"/><circle cx="12" cy="12" r="1.2" fill="#4a4a4a"/></svg><div class="t" style="left:128px;top:507px;font-size:14.2px;color:#2f2f2f">Flachkopfschraube M3x6 mit Schlitz, 4.8</div><svg class="a" style="left:428.0px;top:506px" width="17" height="16"><path d="M8.5 0.5 L16.5 15 L0.5 15Z" fill="#fdc541" stroke="#fdc541" stroke-width="1" stroke-linejoin="round"/></svg><div class="t" style="left:615px;top:507px;font-size:14.3px;color:#2f2f2f">6134</div><div class="t" style="left:727px;top:507px;font-size:14.3px;color:#2f2f2f">000882</div><div class="t" style="left:824px;top:507px;font-size:14.3px;color:#2f2f2f">20</div><div class="t" style="left:884px;top:507px;font-size:14.3px;color:#2f2f2f">5</div><div class="t" style="left:945px;top:507px;font-size:14.3px;color:#2f2f2f">01.12.2021 00:00:00</div><div class="a" style="left:46px;top:526px;width:1px;height:25px;background:#eef0f2"></div><div class="a" style="left:406px;top:526px;width:1px;height:25px;background:#eef0f2"></div><div class="a" style="left:467px;top:526px;width:1px;height:25px;background:#eef0f2"></div><div class="a" style="left:550px;top:526px;width:1px;height:25px;background:#eef0f2"></div><div class="a" style="left:611px;top:526px;width:1px;height:25px;background:#eef0f2"></div><div class="a" style="left:722px;top:526px;width:1px;height:25px;background:#eef0f2"></div><div class="a" style="left:819px;top:526px;width:1px;height:25px;background:#eef0f2"></div><div class="a" style="left:880px;top:526px;width:1px;height:25px;background:#eef0f2"></div><div class="a" style="left:941px;top:526px;width:1px;height:25px;background:#eef0f2"></div><svg class="a" style="left:110.5px;top:531px" width="13" height="18"><ellipse cx="6" cy="2" rx="2.2" ry="1.5" fill="#4a4a4a"/><path d="M0.5 16 L1.5 14.5 C1.5 9 3.5 5.5 6 4.5 C8.5 5.5 10.5 9 10.5 14.5 L11.5 16Z" fill="#4a4a4a"/></svg><div class="t" style="left:128px;top:532px;font-size:14.2px;color:#2f2f2f">Gehäuse zur Leiterplattenabschirmung</div><div class="a" style="left:428.5px;top:530.5px;width:16px;height:16px;border-radius:50%;background:#007a56"></div><div class="t" style="left:555px;top:532px;font-size:14.3px;color:#2f2f2f">20</div><div class="t" style="left:615px;top:532px;font-size:14.3px;color:#2f2f2f">2271</div><div class="t" style="left:727px;top:532px;font-size:14.3px;color:#2f2f2f">211868</div><div class="t" style="left:824px;top:532px;font-size:14.3px;color:#2f2f2f">10</div><div class="t" style="left:884px;top:532px;font-size:14.3px;color:#2f2f2f">3</div><div class="t" style="left:945px;top:532px;font-size:14.3px;color:#2f2f2f">27.02.2024 00:00:00</div><div class="a" style="left:16px;top:552px;width:1065px;height:24px;background:#f2f3f5"></div><div class="a" style="left:46px;top:551px;width:1px;height:25px;background:#fff"></div><div class="a" style="left:406px;top:551px;width:1px;height:25px;background:#fff"></div><div class="a" style="left:467px;top:551px;width:1px;height:25px;background:#fff"></div><div class="a" style="left:550px;top:551px;width:1px;height:25px;background:#fff"></div><div class="a" style="left:611px;top:551px;width:1px;height:25px;background:#fff"></div><div class="a" style="left:722px;top:551px;width:1px;height:25px;background:#fff"></div><div class="a" style="left:819px;top:551px;width:1px;height:25px;background:#fff"></div><div class="a" style="left:880px;top:551px;width:1px;height:25px;background:#fff"></div><div class="a" style="left:941px;top:551px;width:1px;height:25px;background:#fff"></div><svg class="a" style="left:110px;top:558px" width="16" height="15"><path d="M0 0.5 H2 L3 4.8 H14.2 L13.6 8.5 L3.8 9.5 V11 H13.2" fill="none" stroke="#4a4a4a" stroke-width="1.3"/><rect x="2.5" y="1.5" width="5.2" height="3.2" fill="#4a4a4a"/><rect x="8.5" y="1.5" width="5.6" height="3.2" fill="#4a4a4a"/><rect x="3.2" y="5.8" width="4.4" height="2.8" fill="#4a4a4a"/><rect x="8.4" y="5.8" width="5" height="2.4" fill="#4a4a4a"/><circle cx="4.5" cy="12" r="1.2" fill="#4a4a4a"/><circle cx="12" cy="12" r="1.2" fill="#4a4a4a"/></svg><div class="t" style="left:128px;top:557px;font-size:14.2px;color:#2f2f2f">Gehäuse zur Leiterplattenabschirmung</div><svg class="a" style="left:428.0px;top:556px" width="17" height="16"><path d="M8.5 0.5 L16.5 15 L0.5 15Z" fill="#fdc541" stroke="#fdc541" stroke-width="1" stroke-linejoin="round"/></svg><div class="t" style="left:615px;top:557px;font-size:14.3px;color:#2f2f2f">2271</div><div class="t" style="left:727px;top:557px;font-size:14.3px;color:#2f2f2f">000882</div><div class="t" style="left:824px;top:557px;font-size:14.3px;color:#2f2f2f">30</div><div class="t" style="left:884px;top:557px;font-size:14.3px;color:#2f2f2f">5</div><div class="t" style="left:945px;top:557px;font-size:14.3px;color:#2f2f2f">01.12.2021 00:00:00</div><div class="a" style="left:46px;top:576px;width:1px;height:25px;background:#eef0f2"></div><div class="a" style="left:406px;top:576px;width:1px;height:25px;background:#eef0f2"></div><div class="a" style="left:467px;top:576px;width:1px;height:25px;background:#eef0f2"></div><div class="a" style="left:550px;top:576px;width:1px;height:25px;background:#eef0f2"></div><div class="a" style="left:611px;top:576px;width:1px;height:25px;background:#eef0f2"></div><div class="a" style="left:722px;top:576px;width:1px;height:25px;background:#eef0f2"></div><div class="a" style="left:819px;top:576px;width:1px;height:25px;background:#eef0f2"></div><div class="a" style="left:880px;top:576px;width:1px;height:25px;background:#eef0f2"></div><div class="a" style="left:941px;top:576px;width:1px;height:25px;background:#eef0f2"></div><div class="a" style="left:31px;top:585px;width:9px;height:9px;border:1px solid #4a4a4a"></div><div class="a" style="left:33px;top:589px;width:5px;height:1px;background:#4a4a4a"></div><svg class="a" style="left:70.5px;top:581px" width="13" height="18"><ellipse cx="6" cy="2" rx="2.2" ry="1.5" fill="#4a4a4a"/><path d="M0.5 16 L1.5 14.5 C1.5 9 3.5 5.5 6 4.5 C8.5 5.5 10.5 9 10.5 14.5 L11.5 16Z" fill="#4a4a4a"/></svg><div class="t" style="left:88px;top:582px;font-size:14.2px;color:#2f2f2f">Unterbaugruppe 1 zum Gerät 890003</div><div class="a" style="left:428.5px;top:580.5px;width:16px;height:16px;border-radius:50%;background:#007a56"></div><div class="t" style="left:555px;top:582px;font-size:14.3px;color:#2f2f2f">10</div><div class="t" style="left:615px;top:582px;font-size:14.3px;color:#2f2f2f">890001</div><div class="t" style="left:727px;top:582px;font-size:14.3px;color:#2f2f2f">211868</div><div class="t" style="left:824px;top:582px;font-size:14.3px;color:#2f2f2f">10</div><div class="t" style="left:884px;top:582px;font-size:14.3px;color:#2f2f2f">3</div><div class="t" style="left:945px;top:582px;font-size:14.3px;color:#2f2f2f">28.02.2024 00:00:00</div><div class="a" style="left:16px;top:602px;width:1065px;height:24px;background:#f2f3f5"></div><div class="a" style="left:46px;top:601px;width:1px;height:25px;background:#fff"></div><div class="a" style="left:406px;top:601px;width:1px;height:25px;background:#fff"></div><div class="a" style="left:467px;top:601px;width:1px;height:25px;background:#fff"></div><div class="a" style="left:550px;top:601px;width:1px;height:25px;background:#fff"></div><div class="a" style="left:611px;top:601px;width:1px;height:25px;background:#fff"></div><div class="a" style="left:722px;top:601px;width:1px;height:25px;background:#fff"></div><div class="a" style="left:819px;top:601px;width:1px;height:25px;background:#fff"></div><div class="a" style="left:880px;top:601px;width:1px;height:25px;background:#fff"></div><div class="a" style="left:941px;top:601px;width:1px;height:25px;background:#fff"></div><div class="a" style="left:31px;top:610px;width:9px;height:9px;border:1px solid #4a4a4a"></div><div class="a" style="left:33px;top:614px;width:5px;height:1px;background:#4a4a4a"></div><svg class="a" style="left:89px;top:606px" width="18" height="18"><path d="M2 3.5 L4.2 5.5 L5.8 4.2 L4 1.8 C6.2 1 8.2 2.8 7.6 5.2 L12.2 9.8 C14.5 9.2 16.2 11.2 15.4 13.4 L13.4 11.8 L11.8 13.2 L13.6 15.2 C11.4 16.2 9.2 14.2 9.8 11.8 L5.2 7.4 C2.8 8 1 5.8 2 3.5Z" fill="#4a4a4a"/></svg><div class="t" style="left:108px;top:607px;font-size:14.2px;color:#2f2f2f">Unterbaugruppe 1 zum Gerät 890003</div><div class="a" style="left:428.5px;top:605.5px;width:16px;height:16px;border-radius:50%;background:#007a56"></div><div class="a" style="left:500.5px;top:605.5px;width:16px;height:16px;border-radius:50%;background:#007a56"></div><div class="t" style="left:555px;top:607px;font-size:14.3px;color:#2f2f2f">10</div><div class="t" style="left:615px;top:607px;font-size:14.3px;color:#2f2f2f">890001</div><div class="t" style="left:727px;top:607px;font-size:14.3px;color:#2f2f2f">211868</div><div class="t" style="left:824px;top:607px;font-size:14.3px;color:#2f2f2f">10</div><div class="t" style="left:884px;top:607px;font-size:14.3px;color:#2f2f2f">3</div><div class="t" style="left:945px;top:607px;font-size:14.3px;color:#2f2f2f">27.02.2024 13:46:42</div><div class="a" style="left:46px;top:626px;width:1px;height:25px;background:#eef0f2"></div><div class="a" style="left:406px;top:626px;width:1px;height:25px;background:#eef0f2"></div><div class="a" style="left:467px;top:626px;width:1px;height:25px;background:#eef0f2"></div><div class="a" style="left:550px;top:626px;width:1px;height:25px;background:#eef0f2"></div><div class="a" style="left:611px;top:626px;width:1px;height:25px;background:#eef0f2"></div><div class="a" style="left:722px;top:626px;width:1px;height:25px;background:#eef0f2"></div><div class="a" style="left:819px;top:626px;width:1px;height:25px;background:#eef0f2"></div><div class="a" style="left:880px;top:626px;width:1px;height:25px;background:#eef0f2"></div><div class="a" style="left:941px;top:626px;width:1px;height:25px;background:#eef0f2"></div><svg class="a" style="left:110px;top:631.5px" width="17" height="17"><g transform="translate(5 5)"><circle r="3.6" fill="#4a4a4a"/><g fill="#4a4a4a"><rect x="-1" y="-5.2" width="2" height="10.4"/><rect x="-1" y="-5.2" width="2" height="10.4" transform="rotate(45)"/><rect x="-1" y="-5.2" width="2" height="10.4" transform="rotate(90)"/><rect x="-1" y="-5.2" width="2" height="10.4" transform="rotate(135)"/></g><circle r="1.6" fill="#fff"/></g><g transform="translate(11 11)"><circle r="2.6" fill="#4a4a4a"/><g fill="#4a4a4a"><rect x="-0.8" y="-3.8" width="1.6" height="7.6"/><rect x="-0.8" y="-3.8" width="1.6" height="7.6" transform="rotate(60)"/><rect x="-0.8" y="-3.8" width="1.6" height="7.6" transform="rotate(120)"/></g><circle r="1" fill="#fff"/></g></svg><div class="t" style="left:128px;top:632px;font-size:14.2px;color:#2f2f2f">Finishen und Kontrollieren</div><div class="a" style="left:428.5px;top:630.5px;width:16px;height:16px;border-radius:50%;background:#007a56"></div><div class="t" style="left:555px;top:632px;font-size:14.3px;color:#2f2f2f">10</div><div class="t" style="left:615px;top:632px;font-size:14.3px;color:#2f2f2f">150/150</div><div class="t" style="left:727px;top:632px;font-size:14.3px;color:#2f2f2f">211868</div><div class="t" style="left:824px;top:632px;font-size:14.3px;color:#2f2f2f">10</div><div class="t" style="left:884px;top:632px;font-size:14.3px;color:#2f2f2f">3</div><div class="t" style="left:945px;top:632px;font-size:14.3px;color:#2f2f2f">27.02.2024 13:53:18</div><div class="a" style="left:16px;top:652px;width:1065px;height:24px;background:#f2f3f5"></div><div class="a" style="left:46px;top:651px;width:1px;height:25px;background:#fff"></div><div class="a" style="left:406px;top:651px;width:1px;height:25px;background:#fff"></div><div class="a" style="left:467px;top:651px;width:1px;height:25px;background:#fff"></div><div class="a" style="left:550px;top:651px;width:1px;height:25px;background:#fff"></div><div class="a" style="left:611px;top:651px;width:1px;height:25px;background:#fff"></div><div class="a" style="left:722px;top:651px;width:1px;height:25px;background:#fff"></div><div class="a" style="left:819px;top:651px;width:1px;height:25px;background:#fff"></div><div class="a" style="left:880px;top:651px;width:1px;height:25px;background:#fff"></div><div class="a" style="left:941px;top:651px;width:1px;height:25px;background:#fff"></div><svg class="a" style="left:110.5px;top:656px" width="13" height="18"><ellipse cx="6" cy="2" rx="2.2" ry="1.5" fill="#4a4a4a"/><path d="M0.5 16 L1.5 14.5 C1.5 9 3.5 5.5 6 4.5 C8.5 5.5 10.5 9 10.5 14.5 L11.5 16Z" fill="#4a4a4a"/></svg><div class="t" style="left:128px;top:657px;font-size:14.2px;color:#2f2f2f">Leiterplatte Decoder 1610/1612 80125/002</div><div class="a" style="left:428.5px;top:655.5px;width:16px;height:16px;border-radius:50%;background:#007a56"></div><div class="t" style="left:555px;top:657px;font-size:14.3px;color:#2f2f2f">20</div><div class="t" style="left:615px;top:657px;font-size:14.3px;color:#2f2f2f">1725</div><div class="t" style="left:727px;top:657px;font-size:14.3px;color:#2f2f2f">211868</div><div class="t" style="left:824px;top:657px;font-size:14.3px;color:#2f2f2f">10</div><div class="t" style="left:884px;top:657px;font-size:14.3px;color:#2f2f2f">3</div><div class="t" style="left:945px;top:657px;font-size:14.3px;color:#2f2f2f">27.02.2024 00:00:00</div><div class="a" style="left:46px;top:676px;width:1px;height:25px;background:#eef0f2"></div><div class="a" style="left:406px;top:676px;width:1px;height:25px;background:#eef0f2"></div><div class="a" style="left:467px;top:676px;width:1px;height:25px;background:#eef0f2"></div><div class="a" style="left:550px;top:676px;width:1px;height:25px;background:#eef0f2"></div><div class="a" style="left:611px;top:676px;width:1px;height:25px;background:#eef0f2"></div><div class="a" style="left:722px;top:676px;width:1px;height:25px;background:#eef0f2"></div><div class="a" style="left:819px;top:676px;width:1px;height:25px;background:#eef0f2"></div><div class="a" style="left:880px;top:676px;width:1px;height:25px;background:#eef0f2"></div><div class="a" style="left:941px;top:676px;width:1px;height:25px;background:#eef0f2"></div><svg class="a" style="left:110px;top:683px" width="16" height="15"><path d="M0 0.5 H2 L3 4.8 H14.2 L13.6 8.5 L3.8 9.5 V11 H13.2" fill="none" stroke="#4a4a4a" stroke-width="1.3"/><rect x="2.5" y="1.5" width="5.2" height="3.2" fill="#4a4a4a"/><rect x="8.5" y="1.5" width="5.6" height="3.2" fill="#4a4a4a"/><rect x="3.2" y="5.8" width="4.4" height="2.8" fill="#4a4a4a"/><rect x="8.4" y="5.8" width="5" height="2.4" fill="#4a4a4a"/><circle cx="4.5" cy="12" r="1.2" fill="#4a4a4a"/><circle cx="12" cy="12" r="1.2" fill="#4a4a4a"/></svg><div class="t" style="left:128px;top:682px;font-size:14.2px;color:#2f2f2f">Leiterplatte Decoder 1610/1612 80125/002</div><svg class="a" style="left:428.0px;top:681px" width="17" height="16"><path d="M8.5 0.5 L16.5 15 L0.5 15Z" fill="#fdc541" stroke="#fdc541" stroke-width="1" stroke-linejoin="round"/></svg><div class="t" style="left:615px;top:682px;font-size:14.3px;color:#2f2f2f">1725</div><div class="t" style="left:727px;top:682px;font-size:14.3px;color:#2f2f2f">000883</div><div class="t" style="left:824px;top:682px;font-size:14.3px;color:#2f2f2f">10</div><div class="t" style="left:884px;top:682px;font-size:14.3px;color:#2f2f2f">5</div><div class="t" style="left:945px;top:682px;font-size:14.3px;color:#2f2f2f">01.12.2021 00:00:00</div><div class="a" style="left:16px;top:702px;width:1065px;height:24px;background:#f2f3f5"></div><div class="a" style="left:46px;top:701px;width:1px;height:25px;background:#fff"></div><div class="a" style="left:406px;top:701px;width:1px;height:25px;background:#fff"></div><div class="a" style="left:467px;top:701px;width:1px;height:25px;background:#fff"></div><div class="a" style="left:550px;top:701px;width:1px;height:25px;background:#fff"></div><div class="a" style="left:611px;top:701px;width:1px;height:25px;background:#fff"></div><div class="a" style="left:722px;top:701px;width:1px;height:25px;background:#fff"></div><div class="a" style="left:819px;top:701px;width:1px;height:25px;background:#fff"></div><div class="a" style="left:880px;top:701px;width:1px;height:25px;background:#fff"></div><div class="a" style="left:941px;top:701px;width:1px;height:25px;background:#fff"></div><svg class="a" style="left:110px;top:706.5px" width="17" height="17"><g transform="translate(5 5)"><circle r="3.6" fill="#4a4a4a"/><g fill="#4a4a4a"><rect x="-1" y="-5.2" width="2" height="10.4"/><rect x="-1" y="-5.2" width="2" height="10.4" transform="rotate(45)"/><rect x="-1" y="-5.2" width="2" height="10.4" transform="rotate(90)"/><rect x="-1" y="-5.2" width="2" height="10.4" transform="rotate(135)"/></g><circle r="1.6" fill="#f2f3f5"/></g><g transform="translate(11 11)"><circle r="2.6" fill="#4a4a4a"/><g fill="#4a4a4a"><rect x="-0.8" y="-3.8" width="1.6" height="7.6"/><rect x="-0.8" y="-3.8" width="1.6" height="7.6" transform="rotate(60)"/><rect x="-0.8" y="-3.8" width="1.6" height="7.6" transform="rotate(120)"/></g><circle r="1" fill="#f2f3f5"/></g></svg><div class="t" style="left:128px;top:707px;font-size:14.2px;color:#2f2f2f">THT - W&amp;P</div><div class="a" style="left:428.5px;top:705.5px;width:16px;height:16px;border-radius:50%;background:#007a56"></div><div class="t" style="left:555px;top:707px;font-size:14.3px;color:#2f2f2f">10</div><div class="t" style="left:615px;top:707px;font-size:14.3px;color:#2f2f2f">160/160</div><div class="t" style="left:727px;top:707px;font-size:14.3px;color:#2f2f2f">211868</div><div class="t" style="left:824px;top:707px;font-size:14.3px;color:#2f2f2f">10</div><div class="t" style="left:884px;top:707px;font-size:14.3px;color:#2f2f2f">3</div><div class="t" style="left:945px;top:707px;font-size:14.3px;color:#2f2f2f">27.02.2024 13:52:06</div><div class="a" style="left:46px;top:726px;width:1px;height:25px;background:#eef0f2"></div><div class="a" style="left:406px;top:726px;width:1px;height:25px;background:#eef0f2"></div><div class="a" style="left:467px;top:726px;width:1px;height:25px;background:#eef0f2"></div><div class="a" style="left:550px;top:726px;width:1px;height:25px;background:#eef0f2"></div><div class="a" style="left:611px;top:726px;width:1px;height:25px;background:#eef0f2"></div><div class="a" style="left:722px;top:726px;width:1px;height:25px;background:#eef0f2"></div><div class="a" style="left:819px;top:726px;width:1px;height:25px;background:#eef0f2"></div><div class="a" style="left:880px;top:726px;width:1px;height:25px;background:#eef0f2"></div><div class="a" style="left:941px;top:726px;width:1px;height:25px;background:#eef0f2"></div><svg class="a" style="left:110.5px;top:731px" width="13" height="18"><ellipse cx="6" cy="2" rx="2.2" ry="1.5" fill="#4a4a4a"/><path d="M0.5 16 L1.5 14.5 C1.5 9 3.5 5.5 6 4.5 C8.5 5.5 10.5 9 10.5 14.5 L11.5 16Z" fill="#4a4a4a"/></svg><div class="t" style="left:128px;top:732px;font-size:14.2px;color:#2f2f2f">Stiftleiste, SL11 / 124-36G,</div><div class="a" style="left:428.5px;top:730.5px;width:16px;height:16px;border-radius:50%;background:#007a56"></div><div class="t" style="left:555px;top:732px;font-size:14.3px;color:#2f2f2f">20</div><div class="t" style="left:615px;top:732px;font-size:14.3px;color:#2f2f2f">10004</div><div class="t" style="left:727px;top:732px;font-size:14.3px;color:#2f2f2f">211868</div><div class="t" style="left:824px;top:732px;font-size:14.3px;color:#2f2f2f">10</div><div class="t" style="left:884px;top:732px;font-size:14.3px;color:#2f2f2f">3</div><div class="t" style="left:945px;top:732px;font-size:14.3px;color:#2f2f2f">27.02.2024 00:00:00</div><div class="a" style="left:16px;top:752px;width:1065px;height:24px;background:#f2f3f5"></div><div class="a" style="left:46px;top:751px;width:1px;height:25px;background:#fff"></div><div class="a" style="left:406px;top:751px;width:1px;height:25px;background:#fff"></div><div class="a" style="left:467px;top:751px;width:1px;height:25px;background:#fff"></div><div class="a" style="left:550px;top:751px;width:1px;height:25px;background:#fff"></div><div class="a" style="left:611px;top:751px;width:1px;height:25px;background:#fff"></div><div class="a" style="left:722px;top:751px;width:1px;height:25px;background:#fff"></div><div class="a" style="left:819px;top:751px;width:1px;height:25px;background:#fff"></div><div class="a" style="left:880px;top:751px;width:1px;height:25px;background:#fff"></div><div class="a" style="left:941px;top:751px;width:1px;height:25px;background:#fff"></div><svg class="a" style="left:110px;top:758px" width="16" height="15"><path d="M0 0.5 H2 L3 4.8 H14.2 L13.6 8.5 L3.8 9.5 V11 H13.2" fill="none" stroke="#4a4a4a" stroke-width="1.3"/><rect x="2.5" y="1.5" width="5.2" height="3.2" fill="#4a4a4a"/><rect x="8.5" y="1.5" width="5.6" height="3.2" fill="#4a4a4a"/><rect x="3.2" y="5.8" width="4.4" height="2.8" fill="#4a4a4a"/><rect x="8.4" y="5.8" width="5" height="2.4" fill="#4a4a4a"/><circle cx="4.5" cy="12" r="1.2" fill="#4a4a4a"/><circle cx="12" cy="12" r="1.2" fill="#4a4a4a"/></svg><div class="t" style="left:128px;top:757px;font-size:14.2px;color:#2f2f2f">Stiftleiste, SL11 / 124-36G,</div><svg class="a" style="left:428.0px;top:756px" width="17" height="16"><path d="M8.5 0.5 L16.5 15 L0.5 15Z" fill="#fdc541" stroke="#fdc541" stroke-width="1" stroke-linejoin="round"/></svg><div class="t" style="left:615px;top:757px;font-size:14.3px;color:#2f2f2f">10004</div><div class="t" style="left:727px;top:757px;font-size:14.3px;color:#2f2f2f">000883</div><div class="t" style="left:824px;top:757px;font-size:14.3px;color:#2f2f2f">20</div><div class="t" style="left:884px;top:757px;font-size:14.3px;color:#2f2f2f">5</div><div class="t" style="left:945px;top:757px;font-size:14.3px;color:#2f2f2f">01.12.2021 00:00:00</div><div class="a" style="left:46px;top:776px;width:1px;height:25px;background:#eef0f2"></div><div class="a" style="left:406px;top:776px;width:1px;height:25px;background:#eef0f2"></div><div class="a" style="left:467px;top:776px;width:1px;height:25px;background:#eef0f2"></div><div class="a" style="left:550px;top:776px;width:1px;height:25px;background:#eef0f2"></div><div class="a" style="left:611px;top:776px;width:1px;height:25px;background:#eef0f2"></div><div class="a" style="left:722px;top:776px;width:1px;height:25px;background:#eef0f2"></div><div class="a" style="left:819px;top:776px;width:1px;height:25px;background:#eef0f2"></div><div class="a" style="left:880px;top:776px;width:1px;height:25px;background:#eef0f2"></div><div class="a" style="left:941px;top:776px;width:1px;height:25px;background:#eef0f2"></div><svg class="a" style="left:110px;top:781.5px" width="17" height="17"><g transform="translate(5 5)"><circle r="3.6" fill="#4a4a4a"/><g fill="#4a4a4a"><rect x="-1" y="-5.2" width="2" height="10.4"/><rect x="-1" y="-5.2" width="2" height="10.4" transform="rotate(45)"/><rect x="-1" y="-5.2" width="2" height="10.4" transform="rotate(90)"/><rect x="-1" y="-5.2" width="2" height="10.4" transform="rotate(135)"/></g><circle r="1.6" fill="#fff"/></g><g transform="translate(11 11)"><circle r="2.6" fill="#4a4a4a"/><g fill="#4a4a4a"><rect x="-0.8" y="-3.8" width="1.6" height="7.6"/><rect x="-0.8" y="-3.8" width="1.6" height="7.6" transform="rotate(60)"/><rect x="-0.8" y="-3.8" width="1.6" height="7.6" transform="rotate(120)"/></g><circle r="1" fill="#fff"/></g></svg><div class="t" style="left:128px;top:782px;font-size:14.2px;color:#2f2f2f">SMT - SAMSUNG</div><div class="a" style="left:428.5px;top:780.5px;width:16px;height:16px;border-radius:50%;background:#007a56"></div><div class="t" style="left:555px;top:782px;font-size:14.3px;color:#2f2f2f">10</div><div class="t" style="left:615px;top:782px;font-size:14.3px;color:#2f2f2f">140/142</div><div class="t" style="left:727px;top:782px;font-size:14.3px;color:#2f2f2f">211868</div><div class="t" style="left:824px;top:782px;font-size:14.3px;color:#2f2f2f">10</div><div class="t" style="left:884px;top:782px;font-size:14.3px;color:#2f2f2f">3</div><div class="t" style="left:945px;top:782px;font-size:14.3px;color:#2f2f2f">27.02.2024 13:50:00</div><div class="a" style="left:16px;top:802px;width:1065px;height:24px;background:#f2f3f5"></div><div class="a" style="left:46px;top:801px;width:1px;height:25px;background:#fff"></div><div class="a" style="left:406px;top:801px;width:1px;height:25px;background:#fff"></div><div class="a" style="left:467px;top:801px;width:1px;height:25px;background:#fff"></div><div class="a" style="left:550px;top:801px;width:1px;height:25px;background:#fff"></div><div class="a" style="left:611px;top:801px;width:1px;height:25px;background:#fff"></div><div class="a" style="left:722px;top:801px;width:1px;height:25px;background:#fff"></div><div class="a" style="left:819px;top:801px;width:1px;height:25px;background:#fff"></div><div class="a" style="left:880px;top:801px;width:1px;height:25px;background:#fff"></div><div class="a" style="left:941px;top:801px;width:1px;height:25px;background:#fff"></div><svg class="a" style="left:110.5px;top:806px" width="13" height="18"><ellipse cx="6" cy="2" rx="2.2" ry="1.5" fill="#4a4a4a"/><path d="M0.5 16 L1.5 14.5 C1.5 9 3.5 5.5 6 4.5 C8.5 5.5 10.5 9 10.5 14.5 L11.5 16Z" fill="#4a4a4a"/></svg><div class="t" style="left:128px;top:807px;font-size:14.2px;color:#2f2f2f">Keramik-Kondensator, 100nF/63V</div><div class="a" style="left:428.5px;top:805.5px;width:16px;height:16px;border-radius:50%;background:#007a56"></div><div class="t" style="left:555px;top:807px;font-size:14.3px;color:#2f2f2f">20</div><div class="t" style="left:615px;top:807px;font-size:14.3px;color:#2f2f2f">392</div><div class="t" style="left:727px;top:807px;font-size:14.3px;color:#2f2f2f">211868</div><div class="t" style="left:824px;top:807px;font-size:14.3px;color:#2f2f2f">10</div><div class="t" style="left:884px;top:807px;font-size:14.3px;color:#2f2f2f">3</div><div class="t" style="left:945px;top:807px;font-size:14.3px;color:#2f2f2f">23.02.2024 00:00:00</div><div class="a" style="left:46px;top:826px;width:1px;height:25px;background:#eef0f2"></div><div class="a" style="left:406px;top:826px;width:1px;height:25px;background:#eef0f2"></div><div class="a" style="left:467px;top:826px;width:1px;height:25px;background:#eef0f2"></div><div class="a" style="left:550px;top:826px;width:1px;height:25px;background:#eef0f2"></div><div class="a" style="left:611px;top:826px;width:1px;height:25px;background:#eef0f2"></div><div class="a" style="left:722px;top:826px;width:1px;height:25px;background:#eef0f2"></div><div class="a" style="left:819px;top:826px;width:1px;height:25px;background:#eef0f2"></div><div class="a" style="left:880px;top:826px;width:1px;height:25px;background:#eef0f2"></div><div class="a" style="left:941px;top:826px;width:1px;height:25px;background:#eef0f2"></div><svg class="a" style="left:110px;top:831.5px" width="17" height="17"><g transform="translate(5 5)"><circle r="3.6" fill="#4a4a4a"/><g fill="#4a4a4a"><rect x="-1" y="-5.2" width="2" height="10.4"/><rect x="-1" y="-5.2" width="2" height="10.4" transform="rotate(45)"/><rect x="-1" y="-5.2" width="2" height="10.4" transform="rotate(90)"/><rect x="-1" y="-5.2" width="2" height="10.4" transform="rotate(135)"/></g><circle r="1.6" fill="#fff"/></g><g transform="translate(11 11)"><circle r="2.6" fill="#4a4a4a"/><g fill="#4a4a4a"><rect x="-0.8" y="-3.8" width="1.6" height="7.6"/><rect x="-0.8" y="-3.8" width="1.6" height="7.6" transform="rotate(60)"/><rect x="-0.8" y="-3.8" width="1.6" height="7.6" transform="rotate(120)"/></g><circle r="1" fill="#fff"/></g></svg><div class="t" style="left:128px;top:832px;font-size:14.2px;color:#2f2f2f">THT</div><div class="a" style="left:428.5px;top:830.5px;width:16px;height:16px;border-radius:50%;background:#007a56"></div><div class="t" style="left:555px;top:832px;font-size:14.3px;color:#2f2f2f">10</div><div class="t" style="left:615px;top:832px;font-size:14.3px;color:#2f2f2f">130/130</div><div class="t" style="left:727px;top:832px;font-size:14.3px;color:#2f2f2f">211868</div><div class="t" style="left:824px;top:832px;font-size:14.3px;color:#2f2f2f">10</div><div class="t" style="left:884px;top:832px;font-size:14.3px;color:#2f2f2f">3</div><div class="t" style="left:945px;top:832px;font-size:14.3px;color:#2f2f2f">27.02.2024 13:48:48</div><div class="a" style="left:16px;top:852px;width:1065px;height:24px;background:#f2f3f5"></div><div class="a" style="left:46px;top:851px;width:1px;height:25px;background:#fff"></div><div class="a" style="left:406px;top:851px;width:1px;height:25px;background:#fff"></div><div class="a" style="left:467px;top:851px;width:1px;height:25px;background:#fff"></div><div class="a" style="left:550px;top:851px;width:1px;height:25px;background:#fff"></div><div class="a" style="left:611px;top:851px;width:1px;height:25px;background:#fff"></div><div class="a" style="left:722px;top:851px;width:1px;height:25px;background:#fff"></div><div class="a" style="left:819px;top:851px;width:1px;height:25px;background:#fff"></div><div class="a" style="left:880px;top:851px;width:1px;height:25px;background:#fff"></div><div class="a" style="left:941px;top:851px;width:1px;height:25px;background:#fff"></div><svg class="a" style="left:110.5px;top:856px" width="13" height="18"><ellipse cx="6" cy="2" rx="2.2" ry="1.5" fill="#4a4a4a"/><path d="M0.5 16 L1.5 14.5 C1.5 9 3.5 5.5 6 4.5 C8.5 5.5 10.5 9 10.5 14.5 L11.5 16Z" fill="#4a4a4a"/></svg><div class="t" style="left:128px;top:857px;font-size:14.2px;color:#2f2f2f">Netzwerk 8x10k 2%, 0,125W</div><div class="a" style="left:428.5px;top:855.5px;width:16px;height:16px;border-radius:50%;background:#007a56"></div><div class="t" style="left:555px;top:857px;font-size:14.3px;color:#2f2f2f">20</div><div class="t" style="left:615px;top:857px;font-size:14.3px;color:#2f2f2f">25</div><div class="t" style="left:727px;top:857px;font-size:14.3px;color:#2f2f2f">211868</div><div class="t" style="left:824px;top:857px;font-size:14.3px;color:#2f2f2f">10</div><div class="t" style="left:884px;top:857px;font-size:14.3px;color:#2f2f2f">3</div><div class="t" style="left:945px;top:857px;font-size:14.3px;color:#2f2f2f">27.02.2024 00:00:00</div><div class="a" style="left:46px;top:876px;width:1px;height:25px;background:#eef0f2"></div><div class="a" style="left:406px;top:876px;width:1px;height:25px;background:#eef0f2"></div><div class="a" style="left:467px;top:876px;width:1px;height:25px;background:#eef0f2"></div><div class="a" style="left:550px;top:876px;width:1px;height:25px;background:#eef0f2"></div><div class="a" style="left:611px;top:876px;width:1px;height:25px;background:#eef0f2"></div><div class="a" style="left:722px;top:876px;width:1px;height:25px;background:#eef0f2"></div><div class="a" style="left:819px;top:876px;width:1px;height:25px;background:#eef0f2"></div><div class="a" style="left:880px;top:876px;width:1px;height:25px;background:#eef0f2"></div><div class="a" style="left:941px;top:876px;width:1px;height:25px;background:#eef0f2"></div><svg class="a" style="left:110px;top:883px" width="16" height="15"><path d="M0 0.5 H2 L3 4.8 H14.2 L13.6 8.5 L3.8 9.5 V11 H13.2" fill="none" stroke="#4a4a4a" stroke-width="1.3"/><rect x="2.5" y="1.5" width="5.2" height="3.2" fill="#4a4a4a"/><rect x="8.5" y="1.5" width="5.6" height="3.2" fill="#4a4a4a"/><rect x="3.2" y="5.8" width="4.4" height="2.8" fill="#4a4a4a"/><rect x="8.4" y="5.8" width="5" height="2.4" fill="#4a4a4a"/><circle cx="4.5" cy="12" r="1.2" fill="#4a4a4a"/><circle cx="12" cy="12" r="1.2" fill="#4a4a4a"/></svg><div class="t" style="left:128px;top:882px;font-size:14.2px;color:#2f2f2f">Netzwerk 8x10k 2%, 0,125W</div><svg class="a" style="left:428.0px;top:881px" width="17" height="16"><path d="M8.5 0.5 L16.5 15 L0.5 15Z" fill="#fdc541" stroke="#fdc541" stroke-width="1" stroke-linejoin="round"/></svg><div class="t" style="left:615px;top:882px;font-size:14.3px;color:#2f2f2f">25</div><div class="t" style="left:727px;top:882px;font-size:14.3px;color:#2f2f2f">000883</div><div class="t" style="left:824px;top:882px;font-size:14.3px;color:#2f2f2f">30</div><div class="t" style="left:884px;top:882px;font-size:14.3px;color:#2f2f2f">5</div><div class="t" style="left:945px;top:882px;font-size:14.3px;color:#2f2f2f">01.12.2021 00:00:00</div><div class="a" style="left:16px;top:902px;width:1065px;height:24px;background:#f2f3f5"></div><div class="a" style="left:46px;top:901px;width:1px;height:25px;background:#fff"></div><div class="a" style="left:406px;top:901px;width:1px;height:25px;background:#fff"></div><div class="a" style="left:467px;top:901px;width:1px;height:25px;background:#fff"></div><div class="a" style="left:550px;top:901px;width:1px;height:25px;background:#fff"></div><div class="a" style="left:611px;top:901px;width:1px;height:25px;background:#fff"></div><div class="a" style="left:722px;top:901px;width:1px;height:25px;background:#fff"></div><div class="a" style="left:819px;top:901px;width:1px;height:25px;background:#fff"></div><div class="a" style="left:880px;top:901px;width:1px;height:25px;background:#fff"></div><div class="a" style="left:941px;top:901px;width:1px;height:25px;background:#fff"></div><svg class="a" style="left:110px;top:906.5px" width="17" height="17"><g transform="translate(5 5)"><circle r="3.6" fill="#4a4a4a"/><g fill="#4a4a4a"><rect x="-1" y="-5.2" width="2" height="10.4"/><rect x="-1" y="-5.2" width="2" height="10.4" transform="rotate(45)"/><rect x="-1" y="-5.2" width="2" height="10.4" transform="rotate(90)"/><rect x="-1" y="-5.2" width="2" height="10.4" transform="rotate(135)"/></g><circle r="1.6" fill="#f2f3f5"/></g><g transform="translate(11 11)"><circle r="2.6" fill="#4a4a4a"/><g fill="#4a4a4a"><rect x="-0.8" y="-3.8" width="1.6" height="7.6"/><rect x="-0.8" y="-3.8" width="1.6" height="7.6" transform="rotate(60)"/><rect x="-0.8" y="-3.8" width="1.6" height="7.6" transform="rotate(120)"/></g><circle r="1" fill="#f2f3f5"/></g></svg><div class="t" style="left:128px;top:907px;font-size:14.2px;color:#2f2f2f">SMT - MAXIM</div><div class="a" style="left:428.5px;top:905.5px;width:16px;height:16px;border-radius:50%;background:#007a56"></div><div class="t" style="left:555px;top:907px;font-size:14.3px;color:#2f2f2f">10</div><div class="t" style="left:615px;top:907px;font-size:14.3px;color:#2f2f2f">140/142</div><div class="t" style="left:727px;top:907px;font-size:14.3px;color:#2f2f2f">211868</div><div class="t" style="left:824px;top:907px;font-size:14.3px;color:#2f2f2f">10</div><div class="t" style="left:884px;top:907px;font-size:14.3px;color:#2f2f2f">3</div><div class="t" style="left:945px;top:907px;font-size:14.3px;color:#2f2f2f">27.02.2024 13:46:42</div><div class="a" style="left:46px;top:926px;width:1px;height:25px;background:#eef0f2"></div><div class="a" style="left:406px;top:926px;width:1px;height:25px;background:#eef0f2"></div><div class="a" style="left:467px;top:926px;width:1px;height:25px;background:#eef0f2"></div><div class="a" style="left:550px;top:926px;width:1px;height:25px;background:#eef0f2"></div><div class="a" style="left:611px;top:926px;width:1px;height:25px;background:#eef0f2"></div><div class="a" style="left:722px;top:926px;width:1px;height:25px;background:#eef0f2"></div><div class="a" style="left:819px;top:926px;width:1px;height:25px;background:#eef0f2"></div><div class="a" style="left:880px;top:926px;width:1px;height:25px;background:#eef0f2"></div><div class="a" style="left:941px;top:926px;width:1px;height:25px;background:#eef0f2"></div><svg class="a" style="left:110.5px;top:931px" width="13" height="18"><ellipse cx="6" cy="2" rx="2.2" ry="1.5" fill="#4a4a4a"/><path d="M0.5 16 L1.5 14.5 C1.5 9 3.5 5.5 6 4.5 C8.5 5.5 10.5 9 10.5 14.5 L11.5 16Z" fill="#4a4a4a"/></svg><div class="t" style="left:128px;top:932px;font-size:14.2px;color:#2f2f2f">IC MAX690AESA+</div><div class="a" style="left:428.5px;top:930.5px;width:16px;height:16px;border-radius:50%;background:#007a56"></div><div class="t" style="left:555px;top:932px;font-size:14.3px;color:#2f2f2f">20</div><div class="t" style="left:615px;top:932px;font-size:14.3px;color:#2f2f2f">150</div><div class="t" style="left:727px;top:932px;font-size:14.3px;color:#2f2f2f">211868</div><div class="t" style="left:824px;top:932px;font-size:14.3px;color:#2f2f2f">10</div><div class="t" style="left:884px;top:932px;font-size:14.3px;color:#2f2f2f">3</div><div class="t" style="left:945px;top:932px;font-size:14.3px;color:#2f2f2f">27.02.2024 00:00:00</div><div class="a" style="left:16px;top:952px;width:1065px;height:24px;background:#f2f3f5"></div><div class="a" style="left:46px;top:951px;width:1px;height:25px;background:#fff"></div><div class="a" style="left:406px;top:951px;width:1px;height:25px;background:#fff"></div><div class="a" style="left:467px;top:951px;width:1px;height:25px;background:#fff"></div><div class="a" style="left:550px;top:951px;width:1px;height:25px;background:#fff"></div><div class="a" style="left:611px;top:951px;width:1px;height:25px;background:#fff"></div><div class="a" style="left:722px;top:951px;width:1px;height:25px;background:#fff"></div><div class="a" style="left:819px;top:951px;width:1px;height:25px;background:#fff"></div><div class="a" style="left:880px;top:951px;width:1px;height:25px;background:#fff"></div><div class="a" style="left:941px;top:951px;width:1px;height:25px;background:#fff"></div><svg class="a" style="left:110px;top:958px" width="16" height="15"><path d="M0 0.5 H2 L3 4.8 H14.2 L13.6 8.5 L3.8 9.5 V11 H13.2" fill="none" stroke="#4a4a4a" stroke-width="1.3"/><rect x="2.5" y="1.5" width="5.2" height="3.2" fill="#4a4a4a"/><rect x="8.5" y="1.5" width="5.6" height="3.2" fill="#4a4a4a"/><rect x="3.2" y="5.8" width="4.4" height="2.8" fill="#4a4a4a"/><rect x="8.4" y="5.8" width="5" height="2.4" fill="#4a4a4a"/><circle cx="4.5" cy="12" r="1.2" fill="#4a4a4a"/><circle cx="12" cy="12" r="1.2" fill="#4a4a4a"/></svg><div class="t" style="left:128px;top:957px;font-size:14.2px;color:#2f2f2f">IC MAX690AESA+</div><svg class="a" style="left:428.0px;top:956px" width="17" height="16"><path d="M8.5 0.5 L16.5 15 L0.5 15Z" fill="#fdc541" stroke="#fdc541" stroke-width="1" stroke-linejoin="round"/></svg><div class="t" style="left:615px;top:957px;font-size:14.3px;color:#2f2f2f">150</div><div class="t" style="left:727px;top:957px;font-size:14.3px;color:#2f2f2f">000883</div><div class="t" style="left:824px;top:957px;font-size:14.3px;color:#2f2f2f">40</div><div class="t" style="left:884px;top:957px;font-size:14.3px;color:#2f2f2f">5</div><div class="t" style="left:945px;top:957px;font-size:14.3px;color:#2f2f2f">01.12.2021 00:00:00</div><div class="a" style="left:16px;top:301px;width:1065px;height:1px;background:#a9b6be"></div><div class="a" style="left:16px;top:976px;width:1065px;height:25px;background:#fff"></div><div class="a" style="left:406px;top:976px;width:1px;height:25px;background:#eef0f2"></div><div class="a" style="left:467px;top:976px;width:1px;height:25px;background:#eef0f2"></div><div class="a" style="left:550px;top:976px;width:1px;height:25px;background:#eef0f2"></div><div class="a" style="left:611px;top:976px;width:1px;height:25px;background:#eef0f2"></div><div class="a" style="left:722px;top:976px;width:1px;height:25px;background:#eef0f2"></div><div class="a" style="left:819px;top:976px;width:1px;height:25px;background:#eef0f2"></div><div class="a" style="left:880px;top:976px;width:1px;height:25px;background:#eef0f2"></div><div class="a" style="left:941px;top:976px;width:1px;height:25px;background:#eef0f2"></div><div class="a" style="left:16px;top:1002px;width:1065px;height:10px;background:#f2f3f5"></div><div class="a" style="left:1081px;top:261px;width:11px;height:745px;background:#e5e8eb;border-left:1px solid #edf0f2"></div><div class="a" style="left:1082px;top:611px;width:10px;height:77px;background:#cdd3d8"></div><svg class="a" style="left:1083px;top:625px" width="8" height="50"><path d="M6 1 L1.5 5.5 L6 10Z M2 40 L6.5 44.5 L2 49Z" fill="#555"/></svg><div class="a" style="left:1092px;top:260px;width:741px;height:40px;background:#eceef0"></div><div class="a" style="left:1092px;top:281px;width:740px;height:1px;background:#a9b6be"></div><div class="a" style="left:1092px;top:300px;width:741px;height:1px;background:#a9b6be"></div><div class="a" style="left:1832px;top:282px;width:1px;height:18px;background:#a9b6be"></div><div class="a" style="left:1128px;top:282px;width:1px;height:18px;background:#a9b6be"></div><div class="a" style="left:1165px;top:261px;width:1px;height:39px;background:#a9b6be"></div><div class="a" style="left:1202px;top:282px;width:1px;height:18px;background:#a9b6be"></div><div class="a" style="left:1239px;top:282px;width:1px;height:18px;background:#a9b6be"></div><div class="a" style="left:1276px;top:282px;width:1px;height:18px;background:#a9b6be"></div><div class="a" style="left:1313px;top:282px;width:1px;height:18px;background:#a9b6be"></div><div class="a" style="left:1350px;top:282px;width:1px;height:18px;background:#a9b6be"></div><div class="a" style="left:1387px;top:282px;width:1px;height:18px;background:#a9b6be"></div><div class="a" style="left:1424px;top:261px;width:1px;height:39px;background:#a9b6be"></div><div class="a" style="left:1461px;top:282px;width:1px;height:18px;background:#a9b6be"></div><div class="a" style="left:1498px;top:282px;width:1px;height:18px;background:#a9b6be"></div><div class="a" style="left:1535px;top:282px;width:1px;height:18px;background:#a9b6be"></div><div class="a" style="left:1572px;top:282px;width:1px;height:18px;background:#a9b6be"></div><div class="a" style="left:1609px;top:282px;width:1px;height:18px;background:#a9b6be"></div><div class="a" style="left:1646px;top:282px;width:1px;height:18px;background:#a9b6be"></div><div class="a" style="left:1683px;top:261px;width:1px;height:39px;background:#a9b6be"></div><div class="a" style="left:1720px;top:282px;width:1px;height:18px;background:#a9b6be"></div><div class="a" style="left:1757px;top:282px;width:1px;height:18px;background:#a9b6be"></div><div class="a" style="left:1794px;top:282px;width:1px;height:18px;background:#a9b6be"></div><div class="a" style="left:1832px;top:282px;width:1px;height:18px;background:#a9b6be"></div><div class="t" style="left:1094px;top:285.5px;font-size:13px;color:#2f2f2f">S</div><div class="t" style="left:1131px;top:285.5px;font-size:13px;color:#d0243a">S</div><div class="t" style="left:1168px;top:285.5px;font-size:13px;color:#2f2f2f">M</div><div class="t" style="left:1205px;top:285.5px;font-size:13px;color:#2f2f2f">D</div><div class="t" style="left:1242px;top:285.5px;font-size:13px;color:#2f2f2f">M</div><div class="t" style="left:1279px;top:285.5px;font-size:13px;color:#2f2f2f">D</div><div class="t" style="left:1316px;top:285.5px;font-size:13px;color:#2f2f2f">F</div><div class="t" style="left:1353px;top:285.5px;font-size:13px;color:#2f2f2f">S</div><div class="t" style="left:1390px;top:285.5px;font-size:13px;color:#d0243a">S</div><div class="t" style="left:1427px;top:285.5px;font-size:13px;color:#2f2f2f">M</div><div class="t" style="left:1464px;top:285.5px;font-size:13px;color:#2f2f2f">D</div><div class="t" style="left:1501px;top:285.5px;font-size:13px;color:#2f2f2f">M</div><div class="t" style="left:1538px;top:285.5px;font-size:13px;color:#2f2f2f">D</div><div class="t" style="left:1575px;top:285.5px;font-size:13px;color:#2f2f2f">F</div><div class="t" style="left:1612px;top:285.5px;font-size:13px;color:#2f2f2f">S</div><div class="t" style="left:1649px;top:285.5px;font-size:13px;color:#d0243a">S</div><div class="t" style="left:1686px;top:285.5px;font-size:13px;color:#2f2f2f">M</div><div class="t" style="left:1723px;top:285.5px;font-size:13px;color:#2f2f2f">D</div><div class="t" style="left:1760px;top:285.5px;font-size:13px;color:#2f2f2f">M</div><div class="t" style="left:1797px;top:285.5px;font-size:13px;color:#2f2f2f">D</div><div class="t" style="left:1166.5px;top:265px;font-size:13px;color:#2f2f2f">19.02.2024 KW 8</div><div class="t" style="left:1425.5px;top:265px;font-size:13px;color:#2f2f2f">26.02.2024 KW 9</div><div class="t" style="left:1684.5px;top:265px;font-size:13px;color:#2f2f2f">04.03.2024 KW 10</div><div class="a" style="left:1092px;top:301px;width:741px;height:24px;background:#f2f3f5"></div><div class="a" style="left:1092px;top:325px;width:741px;height:25px;background:#fff"></div><div class="a" style="left:1092px;top:350px;width:741px;height:25px;background:#f2f3f5"></div><div class="a" style="left:1092px;top:375px;width:741px;height:25px;background:#fff"></div><div class="a" style="left:1092px;top:400px;width:741px;height:25px;background:#f2f3f5"></div><div class="a" style="left:1092px;top:425px;width:741px;height:25px;background:#fff"></div><div class="a" style="left:1092px;top:450px;width:741px;height:25px;background:#f2f3f5"></div><div class="a" style="left:1092px;top:475px;width:741px;height:25px;background:#fff"></div><div class="a" style="left:1092px;top:500px;width:741px;height:25px;background:#f2f3f5"></div><div class="a" style="left:1092px;top:525px;width:741px;height:25px;background:#fff"></div><div class="a" style="left:1092px;top:550px;width:741px;height:25px;background:#f2f3f5"></div><div class="a" style="left:1092px;top:575px;width:741px;height:25px;background:#fff"></div><div class="a" style="left:1092px;top:600px;width:741px;height:25px;background:#f2f3f5"></div><div class="a" style="left:1092px;top:625px;width:741px;height:25px;background:#fff"></div><div class="a" style="left:1092px;top:650px;width:741px;height:25px;background:#f2f3f5"></div><div class="a" style="left:1092px;top:675px;width:741px;height:25px;background:#fff"></div><div class="a" style="left:1092px;top:700px;width:741px;height:25px;background:#f2f3f5"></div><div class="a" style="left:1092px;top:725px;width:741px;height:25px;background:#fff"></div><div class="a" style="left:1092px;top:750px;width:741px;height:25px;background:#f2f3f5"></div><div class="a" style="left:1092px;top:775px;width:741px;height:25px;background:#fff"></div><div class="a" style="left:1092px;top:800px;width:741px;height:25px;background:#f2f3f5"></div><div class="a" style="left:1092px;top:825px;width:741px;height:25px;background:#fff"></div><div class="a" style="left:1092px;top:850px;width:741px;height:25px;background:#f2f3f5"></div><div class="a" style="left:1092px;top:875px;width:741px;height:25px;background:#fff"></div><div class="a" style="left:1092px;top:900px;width:741px;height:25px;background:#f2f3f5"></div><div class="a" style="left:1092px;top:925px;width:741px;height:25px;background:#fff"></div><div class="a" style="left:1092px;top:950px;width:741px;height:25px;background:#f2f3f5"></div><div class="a" style="left:1092px;top:975px;width:741px;height:25px;background:#fff"></div><div class="a" style="left:1092px;top:1000px;width:741px;height:10px;background:#f2f3f5"></div><div class="a" style="left:1092px;top:301px;width:36px;height:24px;background:#d8f4d6"></div><div class="a" style="left:1129px;top:301px;width:36px;height:24px;background:#d8f4d6"></div><div class="a" style="left:1351px;top:301px;width:36px;height:24px;background:#d8f4d6"></div><div class="a" style="left:1388px;top:301px;width:36px;height:24px;background:#d8f4d6"></div><div class="a" style="left:1610px;top:301px;width:36px;height:24px;background:#d8f4d6"></div><div class="a" style="left:1647px;top:301px;width:36px;height:24px;background:#d8f4d6"></div><div class="a" style="left:1092px;top:326px;width:36px;height:24px;background:#e0fde0"></div><div class="a" style="left:1129px;top:326px;width:36px;height:24px;background:#e0fde0"></div><div class="a" style="left:1351px;top:326px;width:36px;height:24px;background:#e0fde0"></div><div class="a" style="left:1388px;top:326px;width:36px;height:24px;background:#e0fde0"></div><div class="a" style="left:1610px;top:326px;width:36px;height:24px;background:#e0fde0"></div><div class="a" style="left:1647px;top:326px;width:36px;height:24px;background:#e0fde0"></div><div class="a" style="left:1092px;top:351px;width:36px;height:24px;background:#d8f4d6"></div><div class="a" style="left:1129px;top:351px;width:36px;height:24px;background:#d8f4d6"></div><div class="a" style="left:1351px;top:351px;width:36px;height:24px;background:#d8f4d6"></div><div class="a" style="left:1388px;top:351px;width:36px;height:24px;background:#d8f4d6"></div><div class="a" style="left:1610px;top:351px;width:36px;height:24px;background:#d8f4d6"></div><div class="a" style="left:1647px;top:351px;width:36px;height:24px;background:#d8f4d6"></div><div class="a" style="left:1092px;top:376px;width:36px;height:24px;background:#e0fde0"></div><div class="a" style="left:1129px;top:376px;width:36px;height:24px;background:#e0fde0"></div><div class="a" style="left:1351px;top:376px;width:36px;height:24px;background:#e0fde0"></div><div class="a" style="left:1388px;top:376px;width:36px;height:24px;background:#e0fde0"></div><div class="a" style="left:1610px;top:376px;width:36px;height:24px;background:#e0fde0"></div><div class="a" style="left:1647px;top:376px;width:36px;height:24px;background:#e0fde0"></div><div class="a" style="left:1092px;top:401px;width:36px;height:24px;background:#d8f4d6"></div><div class="a" style="left:1129px;top:401px;width:36px;height:24px;background:#d8f4d6"></div><div class="a" style="left:1351px;top:401px;width:36px;height:24px;background:#d8f4d6"></div><div class="a" style="left:1388px;top:401px;width:36px;height:24px;background:#d8f4d6"></div><div class="a" style="left:1610px;top:401px;width:36px;height:24px;background:#d8f4d6"></div><div class="a" style="left:1647px;top:401px;width:36px;height:24px;background:#d8f4d6"></div><div class="a" style="left:1092px;top:426px;width:36px;height:24px;background:#e0fde0"></div><div class="a" style="left:1129px;top:426px;width:36px;height:24px;background:#e0fde0"></div><div class="a" style="left:1351px;top:426px;width:36px;height:24px;background:#e0fde0"></div><div class="a" style="left:1388px;top:426px;width:36px;height:24px;background:#e0fde0"></div><div class="a" style="left:1610px;top:426px;width:36px;height:24px;background:#e0fde0"></div><div class="a" style="left:1647px;top:426px;width:36px;height:24px;background:#e0fde0"></div><div class="a" style="left:1092px;top:451px;width:36px;height:24px;background:#d8f4d6"></div><div class="a" style="left:1129px;top:451px;width:36px;height:24px;background:#d8f4d6"></div><div class="a" style="left:1351px;top:451px;width:36px;height:24px;background:#d8f4d6"></div><div class="a" style="left:1388px;top:451px;width:36px;height:24px;background:#d8f4d6"></div><div class="a" style="left:1610px;top:451px;width:36px;height:24px;background:#d8f4d6"></div><div class="a" style="left:1647px;top:451px;width:36px;height:24px;background:#d8f4d6"></div><div class="a" style="left:1092px;top:476px;width:36px;height:24px;background:#e0fde0"></div><div class="a" style="left:1129px;top:476px;width:36px;height:24px;background:#e0fde0"></div><div class="a" style="left:1351px;top:476px;width:36px;height:24px;background:#e0fde0"></div><div class="a" style="left:1388px;top:476px;width:36px;height:24px;background:#e0fde0"></div><div class="a" style="left:1610px;top:476px;width:36px;height:24px;background:#e0fde0"></div><div class="a" style="left:1647px;top:476px;width:36px;height:24px;background:#e0fde0"></div><div class="a" style="left:1092px;top:501px;width:36px;height:24px;background:#d8f4d6"></div><div class="a" style="left:1129px;top:501px;width:36px;height:24px;background:#d8f4d6"></div><div class="a" style="left:1351px;top:501px;width:36px;height:24px;background:#d8f4d6"></div><div class="a" style="left:1388px;top:501px;width:36px;height:24px;background:#d8f4d6"></div><div class="a" style="left:1610px;top:501px;width:36px;height:24px;background:#d8f4d6"></div><div class="a" style="left:1647px;top:501px;width:36px;height:24px;background:#d8f4d6"></div><div class="a" style="left:1092px;top:526px;width:36px;height:24px;background:#e0fde0"></div><div class="a" style="left:1129px;top:526px;width:36px;height:24px;background:#e0fde0"></div><div class="a" style="left:1351px;top:526px;width:36px;height:24px;background:#e0fde0"></div><div class="a" style="left:1388px;top:526px;width:36px;height:24px;background:#e0fde0"></div><div class="a" style="left:1610px;top:526px;width:36px;height:24px;background:#e0fde0"></div><div class="a" style="left:1647px;top:526px;width:36px;height:24px;background:#e0fde0"></div><div class="a" style="left:1092px;top:551px;width:36px;height:24px;background:#d8f4d6"></div><div class="a" style="left:1129px;top:551px;width:36px;height:24px;background:#d8f4d6"></div><div class="a" style="left:1351px;top:551px;width:36px;height:24px;background:#d8f4d6"></div><div class="a" style="left:1388px;top:551px;width:36px;height:24px;background:#d8f4d6"></div><div class="a" style="left:1610px;top:551px;width:36px;height:24px;background:#d8f4d6"></div><div class="a" style="left:1647px;top:551px;width:36px;height:24px;background:#d8f4d6"></div><div class="a" style="left:1092px;top:576px;width:36px;height:24px;background:#e0fde0"></div><div class="a" style="left:1129px;top:576px;width:36px;height:24px;background:#e0fde0"></div><div class="a" style="left:1351px;top:576px;width:36px;height:24px;background:#e0fde0"></div><div class="a" style="left:1388px;top:576px;width:36px;height:24px;background:#e0fde0"></div><div class="a" style="left:1610px;top:576px;width:36px;height:24px;background:#e0fde0"></div><div class="a" style="left:1647px;top:576px;width:36px;height:24px;background:#e0fde0"></div><div class="a" style="left:1092px;top:601px;width:36px;height:24px;background:#d8f4d6"></div><div class="a" style="left:1129px;top:601px;width:36px;height:24px;background:#d8f4d6"></div><div class="a" style="left:1351px;top:601px;width:36px;height:24px;background:#d8f4d6"></div><div class="a" style="left:1388px;top:601px;width:36px;height:24px;background:#d8f4d6"></div><div class="a" style="left:1610px;top:601px;width:36px;height:24px;background:#d8f4d6"></div><div class="a" style="left:1647px;top:601px;width:36px;height:24px;background:#d8f4d6"></div><div class="a" style="left:1092px;top:626px;width:36px;height:24px;background:#e0fde0"></div><div class="a" style="left:1129px;top:626px;width:36px;height:24px;background:#e0fde0"></div><div class="a" style="left:1351px;top:626px;width:36px;height:24px;background:#e0fde0"></div><div class="a" style="left:1388px;top:626px;width:36px;height:24px;background:#e0fde0"></div><div class="a" style="left:1610px;top:626px;width:36px;height:24px;background:#e0fde0"></div><div class="a" style="left:1647px;top:626px;width:36px;height:24px;background:#e0fde0"></div><div class="a" style="left:1092px;top:651px;width:36px;height:24px;background:#d8f4d6"></div><div class="a" style="left:1129px;top:651px;width:36px;height:24px;background:#d8f4d6"></div><div class="a" style="left:1351px;top:651px;width:36px;height:24px;background:#d8f4d6"></div><div class="a" style="left:1388px;top:651px;width:36px;height:24px;background:#d8f4d6"></div><div class="a" style="left:1610px;top:651px;width:36px;height:24px;background:#d8f4d6"></div><div class="a" style="left:1647px;top:651px;width:36px;height:24px;background:#d8f4d6"></div><div class="a" style="left:1092px;top:676px;width:36px;height:24px;background:#e0fde0"></div><div class="a" style="left:1129px;top:676px;width:36px;height:24px;background:#e0fde0"></div><div class="a" style="left:1351px;top:676px;width:36px;height:24px;background:#e0fde0"></div><div class="a" style="left:1388px;top:676px;width:36px;height:24px;background:#e0fde0"></div><div class="a" style="left:1610px;top:676px;width:36px;height:24px;background:#e0fde0"></div><div class="a" style="left:1647px;top:676px;width:36px;height:24px;background:#e0fde0"></div><div class="a" style="left:1092px;top:701px;width:36px;height:24px;background:#d8f4d6"></div><div class="a" style="left:1129px;top:701px;width:36px;height:24px;background:#d8f4d6"></div><div class="a" style="left:1351px;top:701px;width:36px;height:24px;background:#d8f4d6"></div><div class="a" style="left:1388px;top:701px;width:36px;height:24px;background:#d8f4d6"></div><div class="a" style="left:1610px;top:701px;width:36px;height:24px;background:#d8f4d6"></div><div class="a" style="left:1647px;top:701px;width:36px;height:24px;background:#d8f4d6"></div><div class="a" style="left:1092px;top:726px;width:36px;height:24px;background:#e0fde0"></div><div class="a" style="left:1129px;top:726px;width:36px;height:24px;background:#e0fde0"></div><div class="a" style="left:1351px;top:726px;width:36px;height:24px;background:#e0fde0"></div><div class="a" style="left:1388px;top:726px;width:36px;height:24px;background:#e0fde0"></div><div class="a" style="left:1610px;top:726px;width:36px;height:24px;background:#e0fde0"></div><div class="a" style="left:1647px;top:726px;width:36px;height:24px;background:#e0fde0"></div><div class="a" style="left:1092px;top:751px;width:36px;height:24px;background:#d8f4d6"></div><div class="a" style="left:1129px;top:751px;width:36px;height:24px;background:#d8f4d6"></div><div class="a" style="left:1351px;top:751px;width:36px;height:24px;background:#d8f4d6"></div><div class="a" style="left:1388px;top:751px;width:36px;height:24px;background:#d8f4d6"></div><div class="a" style="left:1610px;top:751px;width:36px;height:24px;background:#d8f4d6"></div><div class="a" style="left:1647px;top:751px;width:36px;height:24px;background:#d8f4d6"></div><div class="a" style="left:1092px;top:776px;width:36px;height:24px;background:#e0fde0"></div><div class="a" style="left:1129px;top:776px;width:36px;height:24px;background:#e0fde0"></div><div class="a" style="left:1351px;top:776px;width:36px;height:24px;background:#e0fde0"></div><div class="a" style="left:1388px;top:776px;width:36px;height:24px;background:#e0fde0"></div><div class="a" style="left:1610px;top:776px;width:36px;height:24px;background:#e0fde0"></div><div class="a" style="left:1647px;top:776px;width:36px;height:24px;background:#e0fde0"></div><div class="a" style="left:1092px;top:801px;width:36px;height:24px;background:#d8f4d6"></div><div class="a" style="left:1129px;top:801px;width:36px;height:24px;background:#d8f4d6"></div><div class="a" style="left:1351px;top:801px;width:36px;height:24px;background:#d8f4d6"></div><div class="a" style="left:1388px;top:801px;width:36px;height:24px;background:#d8f4d6"></div><div class="a" style="left:1610px;top:801px;width:36px;height:24px;background:#d8f4d6"></div><div class="a" style="left:1647px;top:801px;width:36px;height:24px;background:#d8f4d6"></div><div class="a" style="left:1092px;top:826px;width:36px;height:24px;background:#e0fde0"></div><div class="a" style="left:1129px;top:826px;width:36px;height:24px;background:#e0fde0"></div><div class="a" style="left:1351px;top:826px;width:36px;height:24px;background:#e0fde0"></div><div class="a" style="left:1388px;top:826px;width:36px;height:24px;background:#e0fde0"></div><div class="a" style="left:1610px;top:826px;width:36px;height:24px;background:#e0fde0"></div><div class="a" style="left:1647px;top:826px;width:36px;height:24px;background:#e0fde0"></div><div class="a" style="left:1092px;top:851px;width:36px;height:24px;background:#d8f4d6"></div><div class="a" style="left:1129px;top:851px;width:36px;height:24px;background:#d8f4d6"></div><div class="a" style="left:1351px;top:851px;width:36px;height:24px;background:#d8f4d6"></div><div class="a" style="left:1388px;top:851px;width:36px;height:24px;background:#d8f4d6"></div><div class="a" style="left:1610px;top:851px;width:36px;height:24px;background:#d8f4d6"></div><div class="a" style="left:1647px;top:851px;width:36px;height:24px;background:#d8f4d6"></div><div class="a" style="left:1092px;top:876px;width:36px;height:24px;background:#e0fde0"></div><div class="a" style="left:1129px;top:876px;width:36px;height:24px;background:#e0fde0"></div><div class="a" style="left:1351px;top:876px;width:36px;height:24px;background:#e0fde0"></div><div class="a" style="left:1388px;top:876px;width:36px;height:24px;background:#e0fde0"></div><div class="a" style="left:1610px;top:876px;width:36px;height:24px;background:#e0fde0"></div><div class="a" style="left:1647px;top:876px;width:36px;height:24px;background:#e0fde0"></div><div class="a" style="left:1092px;top:901px;width:36px;height:24px;background:#d8f4d6"></div><div class="a" style="left:1129px;top:901px;width:36px;height:24px;background:#d8f4d6"></div><div class="a" style="left:1351px;top:901px;width:36px;height:24px;background:#d8f4d6"></div><div class="a" style="left:1388px;top:901px;width:36px;height:24px;background:#d8f4d6"></div><div class="a" style="left:1610px;top:901px;width:36px;height:24px;background:#d8f4d6"></div><div class="a" style="left:1647px;top:901px;width:36px;height:24px;background:#d8f4d6"></div><div class="a" style="left:1092px;top:926px;width:36px;height:24px;background:#e0fde0"></div><div class="a" style="left:1129px;top:926px;width:36px;height:24px;background:#e0fde0"></div><div class="a" style="left:1351px;top:926px;width:36px;height:24px;background:#e0fde0"></div><div class="a" style="left:1388px;top:926px;width:36px;height:24px;background:#e0fde0"></div><div class="a" style="left:1610px;top:926px;width:36px;height:24px;background:#e0fde0"></div><div class="a" style="left:1647px;top:926px;width:36px;height:24px;background:#e0fde0"></div><div class="a" style="left:1092px;top:951px;width:36px;height:24px;background:#d8f4d6"></div><div class="a" style="left:1129px;top:951px;width:36px;height:24px;background:#d8f4d6"></div><div class="a" style="left:1351px;top:951px;width:36px;height:24px;background:#d8f4d6"></div><div class="a" style="left:1388px;top:951px;width:36px;height:24px;background:#d8f4d6"></div><div class="a" style="left:1610px;top:951px;width:36px;height:24px;background:#d8f4d6"></div><div class="a" style="left:1647px;top:951px;width:36px;height:24px;background:#d8f4d6"></div><div class="a" style="left:1165px;top:301px;width:2px;height:705px;background:repeating-linear-gradient(to bottom,#000 0,#000 6px,transparent 6px,transparent 9px)"></div><svg class="a" style="left:1160px;top:293px" width="12" height="8"><path d="M0.5 1 L11 1 L5.75 7Z" fill="#00704a"/></svg><svg class="a" style="left:0;top:0;pointer-events:none" width="1920" height="1006"><path d="M1467.7 313.8 L1480.2 319.5 L1467.7 325.2Z" fill="#2b66a0"/><path d="M1531.2 302 L1519 307.5 L1531.2 313Z" fill="#c8354c"/><rect x="1511" y="305.0" width="2" height="16.6" fill="#7aa2c6"/><rect x="1511.2" y="333.09999999999997" width="2" height="10.6" fill="#7aa2c6"/><path d="M1509.5 338.4 H1507.5 V460.4 H1521.4 V588.4 H1515" fill="none" stroke="#1a1a1a" stroke-width="1.5"/><path d="M1508.8 334.79999999999995 L1513 338.4 L1508.8 342.0Z" fill="#1a1a1a"/><path d="M1507.5 347.3 H1521.6 V363.4 H1515" fill="none" stroke="#1a1a1a" stroke-width="1.5"/><circle cx="1511.7" cy="363.4" r="4.5" fill="#7aa2c6"/><path d="M1489 388.4 H1492.3 V378.4 H1500.6 V363.4 H1503" fill="none" stroke="#1a1a1a" stroke-width="1.5"/><path d="M1501.8 359.79999999999995 L1506 363.4 L1501.8 367.0Z" fill="#1a1a1a"/><rect x="1488" y="380.09999999999997" width="2" height="16.6" fill="#7aa2c6"/><path d="M1485.8 384.79999999999995 L1490 388.4 L1485.8 392.0Z" fill="#1a1a1a"/><path d="M1486 388.4 H1484.4 V474.5" fill="none" stroke="#1a1a1a" stroke-width="1.5"/><rect x="1487.6" y="408.09999999999997" width="2" height="10.6" fill="#7aa2c6"/><path d="M1484.4 413.4 H1486" fill="none" stroke="#1a1a1a" stroke-width="1.5"/><path d="M1485.8 409.79999999999995 L1490 413.4 L1485.8 417.0Z" fill="#1a1a1a"/><path d="M1484.4 422.6 H1498.5 V438.4 H1492" fill="none" stroke="#1a1a1a" stroke-width="1.5"/><circle cx="1488.2" cy="438.4" r="4.5" fill="#7aa2c6"/><path d="M1435.5 424.2 H1484.4" fill="none" stroke="#1a1a1a" stroke-width="1.5"/><path d="M1435.5 449.4 H1484.4" fill="none" stroke="#1a1a1a" stroke-width="1.5"/><path d="M1435.5 474.3 H1484.4" fill="none" stroke="#1a1a1a" stroke-width="1.5"/><path d="M1435.5 424.2 V563.4" fill="none" stroke="#1a1a1a" stroke-width="1.5"/><path d="M1430 463.4 H1435.5" fill="none" stroke="#1a1a1a" stroke-width="1.5"/><path d="M1419.5 457.9 L1430.5 463.4 L1419.5 468.9Z" fill="#fdcf6c"/><path d="M1430 513.4 H1435.5" fill="none" stroke="#1a1a1a" stroke-width="1.5"/><path d="M1419.5 507.9 L1430.5 513.4 L1419.5 518.9Z" fill="#fdcf6c"/><path d="M1430 563.4 H1435.5" fill="none" stroke="#1a1a1a" stroke-width="1.5"/><path d="M1419.5 557.9 L1430.5 563.4 L1419.5 568.9Z" fill="#fdcf6c"/><path d="M1484.4 447.6 H1498.5 V538.4 H1492" fill="none" stroke="#1a1a1a" stroke-width="1.5"/><path d="M1484.4 472.4 H1498.5" fill="none" stroke="#1a1a1a" stroke-width="1.5"/><path d="M1492 488.4 H1498.5" fill="none" stroke="#1a1a1a" stroke-width="1.5"/><circle cx="1488.2" cy="488.4" r="4.5" fill="#7aa2c6"/><circle cx="1488.2" cy="538.4" r="4.5" fill="#7aa2c6"/><circle cx="1511.5" cy="588.4" r="4.5" fill="#7aa2c6"/><path d="M1486 613.4 H1487.2 V603.4 H1500.7 V588.4 H1503" fill="none" stroke="#1a1a1a" stroke-width="1.5"/><path d="M1502.1 584.8 L1506.3 588.4 L1502.1 592.0Z" fill="#1a1a1a"/><rect x="1483" y="605.1" width="2" height="16.6" fill="#7aa2c6"/><path d="M1480.8 609.8 L1485 613.4 L1480.8 617.0Z" fill="#1a1a1a"/><path d="M1481 613.4 H1479.4 V797" fill="none" stroke="#1a1a1a" stroke-width="1.5"/><rect x="1483" y="633.1" width="2" height="10.6" fill="#7aa2c6"/><path d="M1479.4 638.4 H1481" fill="none" stroke="#1a1a1a" stroke-width="1.5"/><path d="M1480.8 634.8 L1485 638.4 L1480.8 642.0Z" fill="#1a1a1a"/><path d="M1479.4 647.3 H1493.4 V663.4 H1487" fill="none" stroke="#1a1a1a" stroke-width="1.5"/><circle cx="1483.4" cy="663.4" r="4.5" fill="#7aa2c6"/><path d="M1324.5 649.5 H1479.4" fill="none" stroke="#1a1a1a" stroke-width="1.5"/><path d="M1324.5 686.4 H1479.4" fill="none" stroke="#1a1a1a" stroke-width="1.5"/><path d="M1324.5 748.9 H1479.4" fill="none" stroke="#1a1a1a" stroke-width="1.5"/><path d="M1324.5 786.1 H1479.4" fill="none" stroke="#1a1a1a" stroke-width="1.5"/><path d="M1324.5 649.4 V963.4" fill="none" stroke="#1a1a1a" stroke-width="1.5"/><path d="M1319 688.4 H1324.5" fill="none" stroke="#1a1a1a" stroke-width="1.5"/><path d="M1308.5 682.9 L1319.5 688.4 L1308.5 693.9Z" fill="#fdcf6c"/><path d="M1319 763.4 H1324.5" fill="none" stroke="#1a1a1a" stroke-width="1.5"/><path d="M1308.5 757.9 L1319.5 763.4 L1308.5 768.9Z" fill="#fdcf6c"/><path d="M1319 888.4 H1324.5" fill="none" stroke="#1a1a1a" stroke-width="1.5"/><path d="M1308.5 882.9 L1319.5 888.4 L1308.5 893.9Z" fill="#fdcf6c"/><path d="M1319 963.4 H1324.5" fill="none" stroke="#1a1a1a" stroke-width="1.5"/><path d="M1308.5 957.9 L1319.5 963.4 L1308.5 968.9Z" fill="#fdcf6c"/><rect x="1483" y="708.1" width="2" height="10.6" fill="#7aa2c6"/><path d="M1480.8 709.8 L1485 713.4 L1480.8 717.0Z" fill="#1a1a1a"/><rect x="1483" y="783.1" width="2" height="10.6" fill="#7aa2c6"/><path d="M1480.8 784.8 L1485 788.4 L1480.8 792.0Z" fill="#1a1a1a"/><rect x="1483" y="833.1" width="2" height="10.6" fill="#7aa2c6"/><path d="M1480.8 834.8 L1485 838.4 L1480.8 842.0Z" fill="#1a1a1a"/><rect x="1483" y="908.1" width="2" height="10.6" fill="#7aa2c6"/><path d="M1480.8 909.8 L1485 913.4 L1480.8 917.0Z" fill="#1a1a1a"/><path d="M1481 713.4 H1479.4" fill="none" stroke="#1a1a1a" stroke-width="1.5"/><path d="M1479.4 722.4 H1493.5 V738.4 H1487" fill="none" stroke="#1a1a1a" stroke-width="1.5"/><circle cx="1483.4" cy="738.4" r="4.5" fill="#7aa2c6"/><path d="M1479.4 797.4 H1493.5 V813.4 H1487" fill="none" stroke="#1a1a1a" stroke-width="1.5"/><circle cx="1483.4" cy="813.4" r="4.5" fill="#7aa2c6"/><path d="M1481 838.4 H1479.4 V847.4 H1493.6 V863.4 H1487" fill="none" stroke="#1a1a1a" stroke-width="1.5"/><circle cx="1483.4" cy="863.4" r="4.5" fill="#7aa2c6"/><path d="M1481 913.4 H1479.4 V922.4 H1493.6 V938.4 H1487" fill="none" stroke="#1a1a1a" stroke-width="1.5"/><circle cx="1483.4" cy="938.4" r="4.5" fill="#7aa2c6"/></svg><div class="a" style="left:1833px;top:260px;width:19px;height:41px;background:#f2f3f5"></div><svg class="a" style="left:1833px;top:262px" width="19" height="36"><rect x="8.1" y="3" width="9.900000000000091" height="1.1" fill="#111"/><rect x="9.1" y="7" width="8.900000000000091" height="1.1" fill="#111"/><rect x="10.1" y="11" width="7.900000000000091" height="1.1" fill="#111"/><rect x="11.1" y="15" width="6.900000000000091" height="1.1" fill="#111"/><rect x="12.1" y="19" width="5.900000000000091" height="1.1" fill="#111"/><rect x="13.1" y="23" width="4.900000000000091" height="1.1" fill="#111"/><rect x="14.1" y="27" width="3.900000000000091" height="1.1" fill="#111"/><rect x="15.1" y="31" width="2.900000000000091" height="1.1" fill="#111"/><path d="M5.9 15.4 L9.4 11.9 L12.9 15.4 L9.4 18.9Z" fill="#111"/></svg><div class="a" style="left:1833px;top:301px;width:19px;height:705px;background:#e5e8eb"></div><div class="a" style="left:1835px;top:302px;width:16px;height:15px;background:#eceef0;border-right:1px solid #b9c2c8;border-bottom:1px solid #b9c2c8"></div><svg class="a" style="left:1834px;top:300px" width="18" height="18"><path d="M7.5 4.5H10.5V7.5H13.5V10.5H10.5V13.5H7.5V10.5H4.5V7.5H7.5Z" fill="#1a1a1a"/></svg><div class="a" style="left:1835px;top:318px;width:16px;height:15px;background:#eceef0;border-right:1px solid #b9c2c8;border-bottom:1px solid #b9c2c8"></div><svg class="a" style="left:1834px;top:316px" width="18" height="18"><rect x="5" y="7.5" width="8" height="3" fill="#1a1a1a"/></svg><div class="a" style="left:1835px;top:334px;width:16px;height:15px;background:#eceef0;border-right:1px solid #b9c2c8;border-bottom:1px solid #b9c2c8"></div><svg class="a" style="left:1834px;top:332px" width="18" height="18"><path d="M12 4 L6.5 9 L12 14Z" fill="#1a1a1a"/></svg><div class="a" style="left:1835px;top:350px;width:16px;height:15px;background:#eceef0;border-right:1px solid #b9c2c8;border-bottom:1px solid #b9c2c8"></div><svg class="a" style="left:1834px;top:348px" width="18" height="18"><path d="M6.5 4 L12 9 L6.5 14Z" fill="#1a1a1a"/></svg><div class="a" style="left:1835px;top:366px;width:16px;height:15px;background:#eceef0;border-right:1px solid #b9c2c8;border-bottom:1px solid #b9c2c8"></div><svg class="a" style="left:1834px;top:364px" width="18" height="18"><rect x="7.5" y="4" width="3" height="10.5" fill="#1a1a1a"/></svg><div class="a" style="left:1834px;top:381px;width:17px;height:17px;background:#fff;border:1px solid #b9c2c8"></div><svg class="a" style="left:1835px;top:383px" width="14" height="12"><path d="M3 8 L7 4 L11 8" fill="none" stroke="#5b7180" stroke-width="1.2"/></svg><div class="a" style="left:1834px;top:1004px;width:17px;height:10px;background:#fff;border:1px solid #b9c2c8"></div></body></html>
